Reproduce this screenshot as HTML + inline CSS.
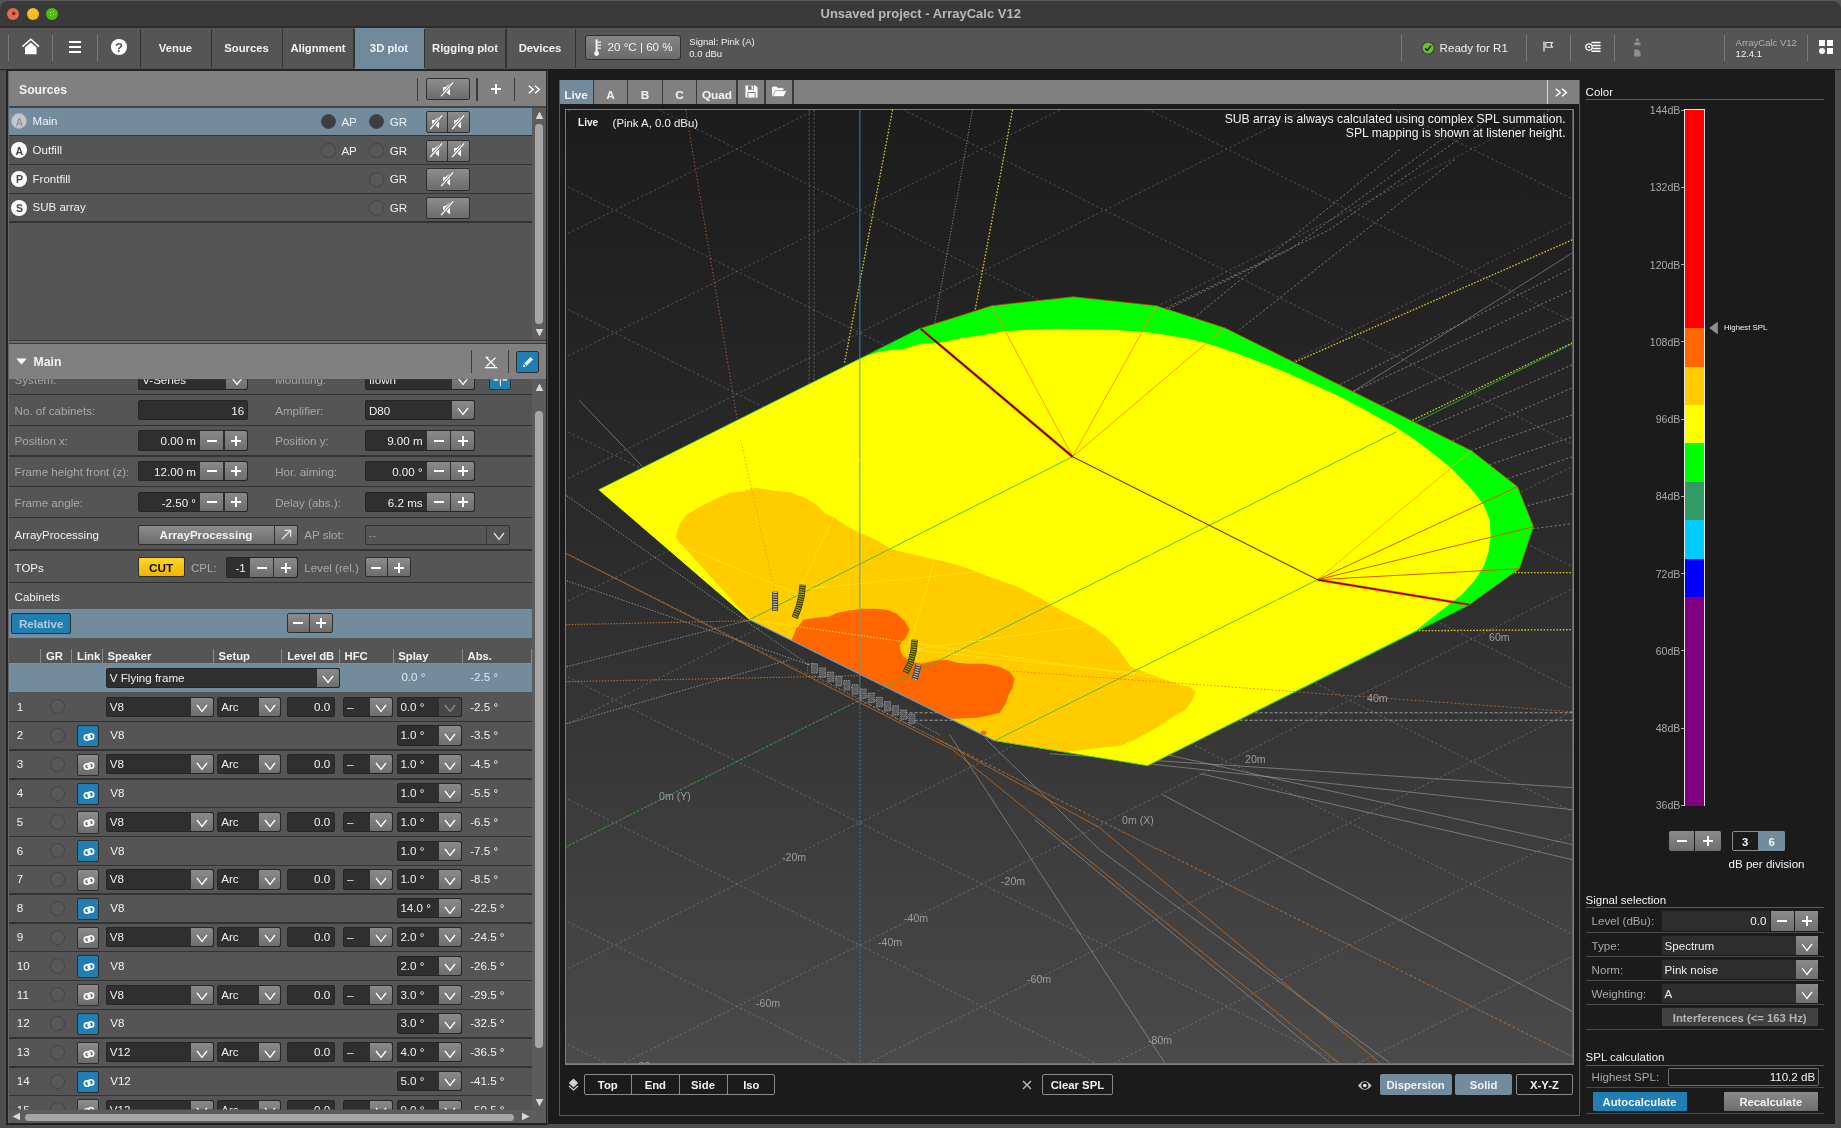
<!DOCTYPE html><html><head><meta charset="utf-8"><title>ArrayCalc</title><style>
*{box-sizing:border-box;margin:0;padding:0}
html,body{width:1841px;height:1128px;overflow:hidden;background:#4d4d4d}
#root{left:0;top:0;width:1841px;height:1128px;will-change:transform}
body{font-family:"Liberation Sans",sans-serif;font-size:11.4px;color:#f0f0f0;position:relative}
div{position:absolute}
.t{white-space:nowrap;line-height:16px;height:16px;color:#f2f2f2;font-size:11.6px}
.b{font-weight:bold}
.c{text-align:center}
.g{color:#a9a9a9}
.h{font-weight:bold;font-size:12.2px}
.tab{font-weight:bold;font-size:11.3px}
.in{background:#2f2f2f;border:1px solid #262626;border-radius:2px}
.btn{background:linear-gradient(#8c8c8c,#6c6c6c);border:1px solid #2e2e2e;border-radius:2px}
.btnf{background:linear-gradient(#8a8a8a,#6e6e6e)}
.blue{background:#1f7fb2;border:1px solid #2e2e2e;border-radius:2px}
.sep{background:#333}
.rad{border:1px solid #444;border-radius:50%;background:#585858}
.radf{border:1px solid #444;border-radius:50%;background:#3e3e3e}
svg{position:absolute;overflow:visible}
</style></head><body><div id="root">
<div class="" style="left:0.00px;top:0.00px;width:1841.00px;height:28.00px;background:#565656"></div>
<div class="" style="left:0.00px;top:1.20px;width:1841.00px;height:24.40px;background:#3a3a3a;border-radius:8px 8px 0 0"></div>
<div class="" style="left:0.00px;top:25.50px;width:1841.00px;height:2.40px;background:#2b2b2b"></div>
<div class="" style="left:7.40px;top:7.50px;width:12.00px;height:12.00px;background:#de6e4c;border-radius:50%"></div>
<div class="" style="left:26.60px;top:7.50px;width:12.00px;height:12.00px;background:#fcb90f;border-radius:50%"></div>
<div class="" style="left:45.80px;top:7.50px;width:12.00px;height:12.00px;background:#4fbd10;border-radius:50%"></div>
<div class="" style="left:11.70px;top:11.80px;width:3.40px;height:3.40px;background:#8a2010;transform:rotate(45deg)"></div>
<div class="" style="left:31.10px;top:10.00px;width:1.00px;height:1.00px;background:#e8dcc0;border-radius:50%"></div>
<div class="" style="left:34.10px;top:10.00px;width:1.00px;height:1.00px;background:#e8dcc0;border-radius:50%"></div>
<div class="" style="left:30.10px;top:12.00px;width:1.00px;height:1.00px;background:#e8dcc0;border-radius:50%"></div>
<div class="" style="left:33.10px;top:12.00px;width:1.00px;height:1.00px;background:#e8dcc0;border-radius:50%"></div>
<div class="" style="left:36.10px;top:12.00px;width:1.00px;height:1.00px;background:#e8dcc0;border-radius:50%"></div>
<div class="" style="left:31.10px;top:14.00px;width:1.00px;height:1.00px;background:#e8dcc0;border-radius:50%"></div>
<div class="" style="left:35.10px;top:14.00px;width:1.00px;height:1.00px;background:#e8dcc0;border-radius:50%"></div>
<div class="" style="left:29.10px;top:15.00px;width:1.00px;height:1.00px;background:#e8dcc0;border-radius:50%"></div>
<div class="" style="left:32.10px;top:16.00px;width:1.00px;height:1.00px;background:#e8dcc0;border-radius:50%"></div>
<div class="" style="left:50.10px;top:12.00px;width:1.00px;height:1.00px;background:#d8e8c8;border-radius:50%"></div>
<div class="" style="left:53.10px;top:11.00px;width:1.00px;height:1.00px;background:#d8e8c8;border-radius:50%"></div>
<div class="" style="left:53.10px;top:14.00px;width:1.00px;height:1.00px;background:#d8e8c8;border-radius:50%"></div>
<div class="" style="left:50.10px;top:15.00px;width:1.00px;height:1.00px;background:#d8e8c8;border-radius:50%"></div>
<div class="t b c" style="left:820.50px;width:200px;top:5.60px;font-size:13px;color:#b9b9b9">Unsaved project - ArrayCalc V12</div>
<div class="" style="left:0.00px;top:28.00px;width:1841.00px;height:40.60px;background:#555"></div>
<div class="" style="left:354.50px;top:28.00px;width:70.00px;height:40.60px;background:#708a9c"></div>
<div class="" style="left:8.00px;top:34.50px;width:1.00px;height:26.50px;background:#7a7a7a"></div>
<div class="" style="left:52.00px;top:34.50px;width:1.00px;height:26.50px;background:#7a7a7a"></div>
<div class="" style="left:96.50px;top:34.50px;width:1.00px;height:26.50px;background:#7a7a7a"></div>
<div class="" style="left:139.80px;top:28.50px;width:1.40px;height:39.00px;background:#333"></div>
<div class="" style="left:210.80px;top:28.50px;width:1.40px;height:39.00px;background:#333"></div>
<div class="" style="left:281.80px;top:28.50px;width:1.40px;height:39.00px;background:#333"></div>
<div class="" style="left:353.30px;top:28.50px;width:1.40px;height:39.00px;background:#333"></div>
<div class="" style="left:423.80px;top:28.50px;width:1.40px;height:39.00px;background:#333"></div>
<div class="" style="left:505.30px;top:28.50px;width:1.40px;height:39.00px;background:#333"></div>
<div class="" style="left:574.70px;top:28.50px;width:1.40px;height:39.00px;background:#333"></div>
<div class="t tab c" style="left:75.50px;width:200px;top:39.60px;">Venue</div>
<div class="t tab c" style="left:146.50px;width:200px;top:39.60px;">Sources</div>
<div class="t tab c" style="left:218.00px;width:200px;top:39.60px;">Alignment</div>
<div class="t tab c" style="left:289.00px;width:200px;top:39.60px;">3D plot</div>
<div class="t tab c" style="left:365.00px;width:200px;top:39.60px;">Rigging plot</div>
<div class="t tab c" style="left:440.00px;width:200px;top:39.60px;">Devices</div>
<svg style="left:21px;top:38px" width="20" height="18" viewBox="0 0 20 18"><path d="M1.5 8.6 L9.8 1.2 L18 8.6" fill="none" stroke="#fff" stroke-width="1.6"/><path d="M4 9.6 L9.8 4.6 L15.6 9.6 V16.3 H4 Z" fill="#fff"/></svg>
<div class="" style="left:69.00px;top:41.30px;width:11.60px;height:1.70px;background:#fff"></div>
<div class="" style="left:69.00px;top:46.20px;width:11.60px;height:1.70px;background:#fff"></div>
<div class="" style="left:69.00px;top:51.10px;width:11.60px;height:1.70px;background:#fff"></div>
<div class="" style="left:111.00px;top:39.30px;width:15.60px;height:15.60px;background:#fff;border-radius:50%"></div>
<div class="t b c" style="left:18.90px;width:200px;top:39.90px;color:#555;font-size:13px">?</div>
<div class="btn" style="left:584.80px;top:34.50px;width:95.80px;height:25.70px;border-radius:3px;background:linear-gradient(#858585,#6b6b6b)"></div>
<svg style="left:593px;top:38.5px" width="10" height="18" viewBox="0 0 10 18"><rect x="2.6" y="0.5" width="2" height="13" fill="#fff"/><circle cx="3.6" cy="14.6" r="2.4" fill="#fff"/><rect x="5" y="2.6" width="3" height="1.1" fill="#fff"/><rect x="5" y="5.6" width="3" height="1.1" fill="#fff"/><rect x="5" y="8.6" width="3" height="1.1" fill="#fff"/></svg>
<div class="t" style="left:607.60px;top:39.30px;font-size:11.6px">20 °C | 60 %</div>
<div class="t" style="left:689.30px;top:34.30px;font-size:9.5px">Signal: Pink (A)</div>
<div class="t" style="left:689.30px;top:45.80px;font-size:9.5px">0.0 dBu</div>
<div class="" style="left:1400.80px;top:35.00px;width:1.00px;height:26.00px;background:#7a7a7a"></div>
<div class="" style="left:1525.50px;top:35.00px;width:1.00px;height:26.00px;background:#7a7a7a"></div>
<div class="" style="left:1569.80px;top:35.00px;width:1.00px;height:26.00px;background:#7a7a7a"></div>
<div class="" style="left:1613.90px;top:35.00px;width:1.00px;height:26.00px;background:#7a7a7a"></div>
<div class="" style="left:1724.40px;top:35.00px;width:1.00px;height:26.00px;background:#7a7a7a"></div>
<div class="" style="left:1807.00px;top:35.00px;width:1.00px;height:26.00px;background:#7a7a7a"></div>
<svg style="left:1421px;top:40.5px" width="14" height="14" viewBox="0 0 14 14"><circle cx="7" cy="7" r="6.6" fill="#3a3a3a"/><circle cx="7" cy="7" r="5.6" fill="#6cbf2b"/><path d="M4 7.2 L6.2 9.4 L10 4.8" fill="none" stroke="#1c1c1c" stroke-width="1.5"/></svg>
<div class="t" style="left:1439.60px;top:40.00px;font-size:11.6px">Ready for R1</div>
<svg style="left:1543px;top:41px" width="11" height="11" viewBox="0 0 11 11"><path d="M1 0.5 V10.5" stroke="#eee" stroke-width="1.2" fill="none"/><path d="M2.8 1.5 H9.4 L7.9 3.9 L9.4 6.3 H2.8 Z" fill="none" stroke="#eee" stroke-width="1.1"/></svg>
<svg style="left:1584.5px;top:41px" width="16" height="12" viewBox="0 0 16 12"><circle cx="4" cy="6" r="3.2" fill="none" stroke="#fff" stroke-width="1.3"/><circle cx="4" cy="6" r="1.1" fill="#fff"/><path d="M6.5 1.6 H15.6 M7.6 4.5 H15.6 M7.6 7.4 H15.6 M6.5 10.3 H15.6" stroke="#fff" stroke-width="1.5"/></svg>
<svg style="left:1633px;top:38px" width="9" height="20" viewBox="0 0 9 20"><circle cx="4.4" cy="1.8" r="1.6" fill="#8e8e8e"/><path d="M1 7.2 Q1 4 4.4 4 Q7.8 4 7.8 7.2 Z" fill="#8e8e8e"/><path d="M1.2 11.6 H5 L7.6 14 V18.6 H1.2 Z" fill="#8e8e8e"/></svg>
<div class="t" style="left:1735.60px;top:34.70px;font-size:9.5px;color:#b0b0b0">ArrayCalc V12</div>
<div class="t" style="left:1735.60px;top:46.20px;font-size:9.5px">12.4.1</div>
<div class="" style="left:1818.80px;top:40.20px;width:6.00px;height:6.00px;background:#fff"></div>
<div class="" style="left:1826.60px;top:40.20px;width:6.00px;height:6.00px;background:#fff"></div>
<div class="" style="left:1818.80px;top:48.20px;width:6.00px;height:6.00px;background:#fff;border-radius:50%"></div>
<div class="" style="left:1826.60px;top:48.20px;width:6.00px;height:6.00px;background:#fff"></div>
<div class="" style="left:0.00px;top:68.60px;width:1841.00px;height:1.40px;background:#262626"></div>
<div class="" style="left:547.60px;top:68.60px;width:1287.60px;height:1055.80px;background:#1b1b1b"></div>
<div class="" style="left:6.30px;top:69.20px;width:541.40px;height:1055.60px;background:#222"></div>
<div class="" style="left:546.90px;top:69.60px;width:0.90px;height:1054.80px;background:#4a4a4a"></div>
<div class="" style="left:7.80px;top:70.60px;width:538.60px;height:1052.80px;background:#666"></div>
<div class="" style="left:8.60px;top:71.20px;width:537.40px;height:1051.60px;background:#555"></div>
<div class="" style="left:8.60px;top:71.20px;width:537.40px;height:35.20px;background:#808080"></div>
<div class="" style="left:8.60px;top:106.40px;width:537.40px;height:1.20px;background:#444"></div>
<div class="t h" style="left:19.00px;top:81.60px;">Sources</div>
<div class="" style="left:416.90px;top:78.00px;width:1.20px;height:22.50px;background:#3c3c3c"></div>
<div class="" style="left:476.40px;top:78.00px;width:1.20px;height:22.50px;background:#3c3c3c"></div>
<div class="" style="left:513.90px;top:78.00px;width:1.20px;height:22.50px;background:#3c3c3c"></div>
<div class="btn" style="left:425.50px;top:78.30px;width:44.50px;height:22.20px;"></div>
<svg style="left:439.10px;top:81.00px" width="16.8" height="16.8" viewBox="-7 -7 14 14"><path d="M-3.6 -1.9 H-1.6 L2.2 -5 V5 L-1.6 1.9 H-3.6 Z" fill="#fff"/><path d="M-5.2 5.6 L4.8 -5.8" stroke="#7b7b7b" stroke-width="2.6"/><path d="M-5.2 5.6 L4.8 -5.8" stroke="#fff" stroke-width="1.1"/></svg>
<div style="left:491.00px;top:88.20px;width:10px;height:2px;background:#fff"></div><div style="left:495.00px;top:84.20px;width:2px;height:10px;background:#fff"></div>
<svg style="left:527.5px;top:84.5px" width="13" height="9" viewBox="0 0 13 9"><path d="M0.8 0.8 L5.2 4.5 L0.8 8.2 M7 0.8 L11.4 4.5 L7 8.2" fill="none" stroke="#fff" stroke-width="1.5"/></svg>
<div class="" style="left:8.60px;top:107.60px;width:523.40px;height:27.40px;background:#728c9e"></div>
<div class="" style="left:8.60px;top:135.00px;width:523.40px;height:1.40px;background:#333"></div>
<div class="" style="left:11.40px;top:113.20px;width:16.00px;height:16.00px;background:#c4c8cb;border-radius:50%;border:1px solid #a9b0b5"></div>
<div class="t b c" style="left:-80.60px;width:200px;top:113.80px;color:#8e9aa3;font-size:10.5px">A</div>
<div class="t" style="left:32.60px;top:112.90px;font-size:11.5px">Main</div>
<div class="radf" style="left:320.60px;top:114.00px;width:15.20px;height:15.20px;"></div>
<div class="t" style="left:341.40px;top:113.80px;font-size:11.6px">AP</div>
<div class="radf" style="left:368.60px;top:114.00px;width:15.20px;height:15.20px;"></div>
<div class="t" style="left:389.80px;top:113.80px;font-size:11.6px">GR</div>
<div class="btn" style="left:425.50px;top:110.70px;width:44.50px;height:22.40px;"></div>
<div class="" style="left:447.20px;top:111.70px;width:1.20px;height:20.40px;background:#2e2e2e"></div>
<svg style="left:428.20px;top:113.60px" width="16.8" height="16.8" viewBox="-7 -7 14 14"><path d="M-3.6 -1.9 H-1.6 L2.2 -5 V5 L-1.6 1.9 H-3.6 Z" fill="#fff"/><path d="M-5.2 5.6 L4.8 -5.8" stroke="#7b7b7b" stroke-width="2.6"/><path d="M-5.2 5.6 L4.8 -5.8" stroke="#fff" stroke-width="1.1"/></svg>
<svg style="left:450.40px;top:113.60px" width="16.8" height="16.8" viewBox="-7 -7 14 14"><path d="M-3.6 -1.9 H-1.6 L2.2 -5 V5 L-1.6 1.9 H-3.6 Z" fill="#fff"/><path d="M-5.2 5.6 L4.8 -5.8" stroke="#7b7b7b" stroke-width="2.6"/><path d="M-5.2 5.6 L4.8 -5.8" stroke="#fff" stroke-width="1.1"/></svg>
<div class="" style="left:8.60px;top:163.80px;width:523.40px;height:1.40px;background:#333"></div>
<div class="" style="left:11.40px;top:142.00px;width:16.00px;height:16.00px;background:#fff;border-radius:50%"></div>
<div class="t b c" style="left:-80.60px;width:200px;top:142.60px;color:#444;font-size:10.5px">A</div>
<div class="t" style="left:32.60px;top:141.70px;font-size:11.5px">Outfill</div>
<div class="rad" style="left:320.60px;top:142.80px;width:15.20px;height:15.20px;"></div>
<div class="t" style="left:341.40px;top:142.60px;font-size:11.6px">AP</div>
<div class="rad" style="left:368.60px;top:142.80px;width:15.20px;height:15.20px;"></div>
<div class="t" style="left:389.80px;top:142.60px;font-size:11.6px">GR</div>
<div class="btn" style="left:425.50px;top:139.50px;width:44.50px;height:22.40px;"></div>
<div class="" style="left:447.20px;top:140.50px;width:1.20px;height:20.40px;background:#2e2e2e"></div>
<svg style="left:428.20px;top:142.40px" width="16.8" height="16.8" viewBox="-7 -7 14 14"><path d="M-3.6 -1.9 H-1.6 L2.2 -5 V5 L-1.6 1.9 H-3.6 Z" fill="#fff"/><path d="M-5.2 5.6 L4.8 -5.8" stroke="#7b7b7b" stroke-width="2.6"/><path d="M-5.2 5.6 L4.8 -5.8" stroke="#fff" stroke-width="1.1"/></svg>
<svg style="left:450.40px;top:142.40px" width="16.8" height="16.8" viewBox="-7 -7 14 14"><path d="M-3.6 -1.9 H-1.6 L2.2 -5 V5 L-1.6 1.9 H-3.6 Z" fill="#fff"/><path d="M-5.2 5.6 L4.8 -5.8" stroke="#7b7b7b" stroke-width="2.6"/><path d="M-5.2 5.6 L4.8 -5.8" stroke="#fff" stroke-width="1.1"/></svg>
<div class="" style="left:8.60px;top:192.60px;width:523.40px;height:1.40px;background:#333"></div>
<div class="" style="left:11.40px;top:170.80px;width:16.00px;height:16.00px;background:#fff;border-radius:50%"></div>
<div class="t b c" style="left:-80.60px;width:200px;top:171.40px;color:#444;font-size:10.5px">P</div>
<div class="t" style="left:32.60px;top:170.50px;font-size:11.5px">Frontfill</div>
<div class="rad" style="left:368.60px;top:171.60px;width:15.20px;height:15.20px;"></div>
<div class="t" style="left:389.80px;top:171.40px;font-size:11.6px">GR</div>
<div class="btn" style="left:425.50px;top:168.30px;width:44.50px;height:22.40px;"></div>
<svg style="left:439.20px;top:171.20px" width="16.8" height="16.8" viewBox="-7 -7 14 14"><path d="M-3.6 -1.9 H-1.6 L2.2 -5 V5 L-1.6 1.9 H-3.6 Z" fill="#fff"/><path d="M-5.2 5.6 L4.8 -5.8" stroke="#7b7b7b" stroke-width="2.6"/><path d="M-5.2 5.6 L4.8 -5.8" stroke="#fff" stroke-width="1.1"/></svg>
<div class="" style="left:8.60px;top:221.40px;width:523.40px;height:1.40px;background:#333"></div>
<div class="" style="left:11.40px;top:199.60px;width:16.00px;height:16.00px;background:#fff;border-radius:50%"></div>
<div class="t b c" style="left:-80.60px;width:200px;top:200.20px;color:#444;font-size:10.5px">S</div>
<div class="t" style="left:32.60px;top:199.30px;font-size:11.5px">SUB array</div>
<div class="rad" style="left:368.60px;top:200.40px;width:15.20px;height:15.20px;"></div>
<div class="t" style="left:389.80px;top:200.20px;font-size:11.6px">GR</div>
<div class="btn" style="left:425.50px;top:197.10px;width:44.50px;height:22.40px;"></div>
<svg style="left:439.20px;top:200.00px" width="16.8" height="16.8" viewBox="-7 -7 14 14"><path d="M-3.6 -1.9 H-1.6 L2.2 -5 V5 L-1.6 1.9 H-3.6 Z" fill="#fff"/><path d="M-5.2 5.6 L4.8 -5.8" stroke="#7b7b7b" stroke-width="2.6"/><path d="M-5.2 5.6 L4.8 -5.8" stroke="#fff" stroke-width="1.1"/></svg>
<div class="" style="left:532.00px;top:107.60px;width:14.00px;height:232.40px;background:#5c5c5c"></div>
<svg style="left:534.5px;top:111px" width="9" height="9" viewBox="0 0 9 9"><path d="M4.5 0.5 L8.3 8 H0.7 Z" fill="#d8d8d8"/></svg>
<svg style="left:534.5px;top:327.5px" width="9" height="9" viewBox="0 0 9 9"><path d="M4.5 8.5 L8.3 1 H0.7 Z" fill="#d8d8d8"/></svg>
<div class="" style="left:535.30px;top:123.50px;width:7.40px;height:200.50px;background:#a6a6a6;border-radius:3.7px"></div>
<div class="" style="left:8.60px;top:339.80px;width:537.40px;height:1.00px;background:#3a3a3a"></div>
<div class="" style="left:8.60px;top:340.80px;width:537.40px;height:1.80px;background:#6c6c6c"></div>
<div class="" style="left:8.60px;top:342.60px;width:537.40px;height:1.20px;background:#3a3a3a"></div>
<div class="" style="left:8.60px;top:343.80px;width:537.40px;height:35.40px;background:#808080"></div>
<svg style="left:15.5px;top:357.6px" width="11" height="7" viewBox="0 0 11 7"><path d="M0.3 0.4 H10.7 L5.5 6.4 Z" fill="#fff"/></svg>
<div class="t h" style="left:33.60px;top:354.20px;">Main</div>
<div class="" style="left:470.80px;top:350.30px;width:1.20px;height:22.30px;background:#3c3c3c"></div>
<div class="" style="left:508.00px;top:350.30px;width:1.20px;height:22.30px;background:#3c3c3c"></div>
<svg style="left:483.5px;top:355.5px" width="14" height="13" viewBox="0 0 14 13"><path d="M2.2 1.2 L11.2 10.4 M11.4 1.8 L2.4 10.4 M1.6 1.4 H4.4" fill="none" stroke="#fff" stroke-width="1.3"/><path d="M0.8 11.6 H13.2" stroke="#fff" stroke-width="1.4"/></svg>
<div class="blue" style="left:516.40px;top:350.60px;width:23.00px;height:22.00px;"></div>
<svg style="left:521.5px;top:355px" width="13" height="13" viewBox="0 0 13 13"><path d="M2.2 8.4 L8.6 2 L11 4.4 L4.6 10.8 Z" fill="#fff"/><path d="M1.6 9.2 L3.8 11.4 L0.9 12.1 Z" fill="#fff"/></svg>
<div style="left:0;top:0;width:1841px;height:1128px;clip-path:inset(379.2px 1309px 18.6px 8.6px)">
<div class="sep" style="left:8.60px;top:394.10px;width:523.40px;height:1.40px;"></div>
<div class="sep" style="left:8.60px;top:424.50px;width:523.40px;height:1.40px;"></div>
<div class="sep" style="left:8.60px;top:455.20px;width:523.40px;height:1.40px;"></div>
<div class="sep" style="left:8.60px;top:485.90px;width:523.40px;height:1.40px;"></div>
<div class="sep" style="left:8.60px;top:516.60px;width:523.40px;height:1.40px;"></div>
<div class="sep" style="left:8.60px;top:549.20px;width:523.40px;height:1.40px;"></div>
<div class="sep" style="left:8.60px;top:581.70px;width:523.40px;height:1.40px;"></div>
<div class="t g" style="left:14.60px;top:372.20px;">System:</div>
<div class="in" style="left:138.30px;top:369.30px;width:110.10px;height:20.40px;"></div>
<div class="t" style="left:142.20px;top:372.20px;">V-Series</div>
<div class="btnf" style="left:225.60px;top:370.30px;width:21.80px;height:18.40px;border-radius:0 2px 2px 0"></div>
<svg style="left:230.70px;top:376.70px" width="12" height="8" viewBox="-6 -4 12 8"><path d="M-5 -3 L0 3.4 L5 -3" fill="none" stroke="#fff" stroke-width="1.3"/></svg>
<div class="t g" style="left:275.20px;top:372.20px;">Mounting:</div>
<div class="in" style="left:365.00px;top:369.30px;width:109.60px;height:20.40px;"></div>
<div class="t" style="left:368.90px;top:372.20px;">flown</div>
<div class="btnf" style="left:452.00px;top:370.30px;width:21.60px;height:18.40px;border-radius:0 2px 2px 0"></div>
<svg style="left:457.00px;top:376.70px" width="12" height="8" viewBox="-6 -4 12 8"><path d="M-5 -3 L0 3.4 L5 -3" fill="none" stroke="#fff" stroke-width="1.3"/></svg>
<div class="blue" style="left:489.00px;top:368.60px;width:22.40px;height:21.60px;"></div>
<svg style="left:493px;top:374px" width="15" height="12" viewBox="0 0 15 12"><path d="M7.4 0 V12" stroke="#fff" stroke-width="1.1"/><rect x="0.6" y="4" width="4.6" height="2.6" fill="#fff"/><rect x="9.6" y="4" width="4.6" height="2.6" fill="#fff"/></svg>
<div class="t g" style="left:14.60px;top:402.70px;">No. of cabinets:</div>
<div class="in" style="left:138.30px;top:399.80px;width:110.10px;height:20.40px;"></div>
<div class="t" style="left:-455.80px;width:700px;text-align:right;top:402.70px;">16</div>
<div class="t g" style="left:275.20px;top:402.70px;">Amplifier:</div>
<div class="in" style="left:365.00px;top:399.80px;width:109.60px;height:20.40px;"></div>
<div class="t" style="left:368.90px;top:402.70px;">D80</div>
<div class="btnf" style="left:452.00px;top:400.80px;width:21.60px;height:18.40px;border-radius:0 2px 2px 0"></div>
<svg style="left:457.00px;top:407.20px" width="12" height="8" viewBox="-6 -4 12 8"><path d="M-5 -3 L0 3.4 L5 -3" fill="none" stroke="#fff" stroke-width="1.3"/></svg>
<div class="t g" style="left:14.60px;top:433.20px;">Position x:</div>
<div class="in" style="left:138.30px;top:430.30px;width:110.10px;height:20.40px;"></div>
<div class="t" style="left:-504.00px;width:700px;text-align:right;top:433.20px;">0.00 m</div>
<div class="btnf" style="left:200.20px;top:431.30px;width:23.20px;height:18.40px;"></div>
<div class="btnf" style="left:224.60px;top:431.30px;width:22.80px;height:18.40px;border-radius:0 2px 2px 0"></div>
<div style="left:207.10px;top:439.70px;width:10px;height:2px;background:#fff"></div>
<div style="left:231.20px;top:439.70px;width:10px;height:2px;background:#fff"></div><div style="left:235.20px;top:435.70px;width:2px;height:10px;background:#fff"></div>
<div class="t g" style="left:275.20px;top:433.20px;">Position y:</div>
<div class="in" style="left:365.00px;top:430.30px;width:109.60px;height:20.40px;"></div>
<div class="t" style="left:-277.40px;width:700px;text-align:right;top:433.20px;">9.00 m</div>
<div class="btnf" style="left:426.80px;top:431.30px;width:23.20px;height:18.40px;"></div>
<div class="btnf" style="left:451.20px;top:431.30px;width:22.40px;height:18.40px;border-radius:0 2px 2px 0"></div>
<div style="left:433.70px;top:439.70px;width:10px;height:2px;background:#fff"></div>
<div style="left:457.60px;top:439.70px;width:10px;height:2px;background:#fff"></div><div style="left:461.60px;top:435.70px;width:2px;height:10px;background:#fff"></div>
<div class="t g" style="left:14.60px;top:463.90px;">Frame height front (z):</div>
<div class="in" style="left:138.30px;top:461.00px;width:110.10px;height:20.40px;"></div>
<div class="t" style="left:-504.00px;width:700px;text-align:right;top:463.90px;">12.00 m</div>
<div class="btnf" style="left:200.20px;top:462.00px;width:23.20px;height:18.40px;"></div>
<div class="btnf" style="left:224.60px;top:462.00px;width:22.80px;height:18.40px;border-radius:0 2px 2px 0"></div>
<div style="left:207.10px;top:470.40px;width:10px;height:2px;background:#fff"></div>
<div style="left:231.20px;top:470.40px;width:10px;height:2px;background:#fff"></div><div style="left:235.20px;top:466.40px;width:2px;height:10px;background:#fff"></div>
<div class="t g" style="left:275.20px;top:463.90px;">Hor. aiming:</div>
<div class="in" style="left:365.00px;top:461.00px;width:109.60px;height:20.40px;"></div>
<div class="t" style="left:-277.40px;width:700px;text-align:right;top:463.90px;">0.00 °</div>
<div class="btnf" style="left:426.80px;top:462.00px;width:23.20px;height:18.40px;"></div>
<div class="btnf" style="left:451.20px;top:462.00px;width:22.40px;height:18.40px;border-radius:0 2px 2px 0"></div>
<div style="left:433.70px;top:470.40px;width:10px;height:2px;background:#fff"></div>
<div style="left:457.60px;top:470.40px;width:10px;height:2px;background:#fff"></div><div style="left:461.60px;top:466.40px;width:2px;height:10px;background:#fff"></div>
<div class="t g" style="left:14.60px;top:494.70px;">Frame angle:</div>
<div class="in" style="left:138.30px;top:491.80px;width:110.10px;height:20.40px;"></div>
<div class="t" style="left:-504.00px;width:700px;text-align:right;top:494.70px;">-2.50 °</div>
<div class="btnf" style="left:200.20px;top:492.80px;width:23.20px;height:18.40px;"></div>
<div class="btnf" style="left:224.60px;top:492.80px;width:22.80px;height:18.40px;border-radius:0 2px 2px 0"></div>
<div style="left:207.10px;top:501.20px;width:10px;height:2px;background:#fff"></div>
<div style="left:231.20px;top:501.20px;width:10px;height:2px;background:#fff"></div><div style="left:235.20px;top:497.20px;width:2px;height:10px;background:#fff"></div>
<div class="t g" style="left:275.20px;top:494.70px;">Delay (abs.):</div>
<div class="in" style="left:365.00px;top:491.80px;width:109.60px;height:20.40px;"></div>
<div class="t" style="left:-277.40px;width:700px;text-align:right;top:494.70px;">6.2 ms</div>
<div class="btnf" style="left:426.80px;top:492.80px;width:23.20px;height:18.40px;"></div>
<div class="btnf" style="left:451.20px;top:492.80px;width:22.40px;height:18.40px;border-radius:0 2px 2px 0"></div>
<div style="left:433.70px;top:501.20px;width:10px;height:2px;background:#fff"></div>
<div style="left:457.60px;top:501.20px;width:10px;height:2px;background:#fff"></div><div style="left:461.60px;top:497.20px;width:2px;height:10px;background:#fff"></div>
<div class="t" style="left:14.60px;top:527.20px;font-size:11.5px">ArrayProcessing</div>
<div class="btn" style="left:137.50px;top:524.50px;width:160.50px;height:20.00px;"></div>
<div class="" style="left:274.20px;top:525.50px;width:1.20px;height:18.00px;background:#2e2e2e"></div>
<div class="t b c" style="left:106.00px;width:200px;top:527.20px;font-size:11.6px">ArrayProcessing</div>
<svg style="left:281px;top:529.00px" width="11" height="11" viewBox="0 0 11 11"><path d="M1 10 L9.4 1.6 M3.6 1.4 H9.6 V7.4" fill="none" stroke="#e8e8e8" stroke-width="1.3"/></svg>
<div class="t g" style="left:304.20px;top:527.20px;">AP slot:</div>
<div class="" style="left:365.00px;top:524.50px;width:145.40px;height:20.00px;background:#555;border:1px solid #333;border-radius:2px"></div>
<div class="" style="left:486.40px;top:525.50px;width:1.00px;height:18.00px;background:#3c3c3c"></div>
<div class="t g" style="left:368.40px;top:527.20px;color:#8c8c8c">--</div>
<svg style="left:492.60px;top:531.70px" width="12" height="8" viewBox="-6 -4 12 8"><path d="M-5 -3 L0 3.4 L5 -3" fill="none" stroke="#e0e0e0" stroke-width="1.3"/></svg>
<div class="t" style="left:14.60px;top:560.10px;font-size:11.5px">TOPs</div>
<div class="" style="left:137.50px;top:557.40px;width:47.20px;height:20.00px;background:linear-gradient(#ffd52e,#f0b400);border:1px solid #2e2e2e;border-radius:2px"></div>
<div class="t b c" style="left:61.20px;width:200px;top:560.30px;color:#111;font-size:11.8px">CUT</div>
<div class="t g" style="left:191.00px;top:560.10px;">CPL:</div>
<div class="in" style="left:225.70px;top:557.20px;width:72.50px;height:20.40px;"></div>
<div class="t" style="left:-454.20px;width:700px;text-align:right;top:560.10px;">-1</div>
<div class="btnf" style="left:250.00px;top:558.20px;width:23.20px;height:18.40px;"></div>
<div class="btnf" style="left:274.40px;top:558.20px;width:22.80px;height:18.40px;border-radius:0 2px 2px 0"></div>
<div style="left:256.90px;top:566.60px;width:10px;height:2px;background:#fff"></div>
<div style="left:281.00px;top:566.60px;width:10px;height:2px;background:#fff"></div><div style="left:285.00px;top:562.60px;width:2px;height:10px;background:#fff"></div>
<div class="t g" style="left:304.20px;top:560.10px;">Level (rel.)</div>
<div class="btn" style="left:365.00px;top:557.40px;width:45.60px;height:20.00px;"></div>
<div class="" style="left:387.20px;top:558.40px;width:1.20px;height:18.00px;background:#2e2e2e"></div>
<div style="left:371.20px;top:566.60px;width:10px;height:2px;background:#fff"></div>
<div style="left:394.20px;top:566.60px;width:10px;height:2px;background:#fff"></div><div style="left:398.20px;top:562.60px;width:2px;height:10px;background:#fff"></div>
<div class="t" style="left:14.60px;top:589.20px;font-size:11.5px">Cabinets</div>
<div class="" style="left:8.60px;top:609.20px;width:523.40px;height:28.70px;background:#728c9e"></div>
<div class="blue" style="left:11.20px;top:613.10px;width:59.60px;height:20.80px;"></div>
<div class="t b c" style="left:-58.80px;width:200px;top:616.20px;color:#b4c8d6;font-size:11.6px">Relative</div>
<div class="btn" style="left:287.20px;top:613.10px;width:45.80px;height:20.20px;"></div>
<div class="" style="left:309.20px;top:614.10px;width:1.20px;height:18.20px;background:#2e2e2e"></div>
<div style="left:293.40px;top:622.30px;width:10px;height:2px;background:#fff"></div>
<div style="left:316.40px;top:622.30px;width:10px;height:2px;background:#fff"></div><div style="left:320.40px;top:618.30px;width:2px;height:10px;background:#fff"></div>
<div class="" style="left:8.60px;top:662.80px;width:523.40px;height:1.20px;background:#8a8a8a"></div>
<div class="" style="left:40.20px;top:649.00px;width:1.10px;height:14.00px;background:#8a8a8a"></div>
<div class="" style="left:71.00px;top:649.00px;width:1.10px;height:14.00px;background:#8a8a8a"></div>
<div class="" style="left:102.10px;top:649.00px;width:1.10px;height:14.00px;background:#8a8a8a"></div>
<div class="" style="left:213.00px;top:649.00px;width:1.10px;height:14.00px;background:#8a8a8a"></div>
<div class="" style="left:281.10px;top:649.00px;width:1.10px;height:14.00px;background:#8a8a8a"></div>
<div class="" style="left:339.00px;top:649.00px;width:1.10px;height:14.00px;background:#8a8a8a"></div>
<div class="" style="left:392.50px;top:649.00px;width:1.10px;height:14.00px;background:#8a8a8a"></div>
<div class="" style="left:461.90px;top:649.00px;width:1.10px;height:14.00px;background:#8a8a8a"></div>
<div class="" style="left:530.80px;top:649.00px;width:1.10px;height:14.00px;background:#8a8a8a"></div>
<div class="t tab" style="left:46.00px;top:647.70px;">GR</div>
<div class="t tab" style="left:77.00px;top:647.70px;">Link</div>
<div class="t tab" style="left:107.50px;top:647.70px;">Speaker</div>
<div class="t tab" style="left:218.60px;top:647.70px;">Setup</div>
<div class="t tab" style="left:287.20px;top:647.70px;">Level dB</div>
<div class="t tab" style="left:344.50px;top:647.70px;">HFC</div>
<div class="t tab" style="left:398.30px;top:647.70px;">Splay</div>
<div class="t tab" style="left:467.50px;top:647.70px;">Abs.</div>
<div class="" style="left:8.60px;top:664.00px;width:523.40px;height:28.20px;background:#728c9e"></div>
<div class="in" style="left:105.90px;top:667.70px;width:233.90px;height:20.00px;"></div>
<div class="t" style="left:109.80px;top:669.50px;">V Flying frame</div>
<div class="btnf" style="left:316.70px;top:668.70px;width:22.10px;height:18.00px;border-radius:0 2px 2px 0"></div>
<svg style="left:321.95px;top:674.90px" width="12" height="8" viewBox="-6 -4 12 8"><path d="M-5 -3 L0 3.4 L5 -3" fill="none" stroke="#fff" stroke-width="1.3"/></svg>
<div class="t" style="left:401.40px;top:669.40px;color:#dde6ec">0.0 °</div>
<div class="t" style="left:470.20px;top:669.40px;color:#dde6ec">-2.5 °</div>
<div class="sep" style="left:8.60px;top:720.60px;width:523.40px;height:1.40px;"></div>
<div class="t" style="left:16.80px;top:698.50px;font-size:11.6px">1</div>
<div class="rad" style="left:49.80px;top:699.20px;width:15.20px;height:15.20px;"></div>
<div class="in" style="left:105.90px;top:696.50px;width:107.70px;height:20.40px;"></div>
<div class="t" style="left:109.80px;top:698.50px;">V8</div>
<div class="btnf" style="left:190.80px;top:697.50px;width:21.80px;height:18.40px;border-radius:0 2px 2px 0"></div>
<svg style="left:195.90px;top:703.90px" width="12" height="8" viewBox="-6 -4 12 8"><path d="M-5 -3 L0 3.4 L5 -3" fill="none" stroke="#fff" stroke-width="1.3"/></svg>
<div class="in" style="left:217.30px;top:696.50px;width:64.00px;height:20.40px;"></div>
<div class="t" style="left:221.20px;top:698.50px;">Arc</div>
<div class="btnf" style="left:258.80px;top:697.50px;width:21.50px;height:18.40px;border-radius:0 2px 2px 0"></div>
<svg style="left:263.75px;top:703.90px" width="12" height="8" viewBox="-6 -4 12 8"><path d="M-5 -3 L0 3.4 L5 -3" fill="none" stroke="#fff" stroke-width="1.3"/></svg>
<div class="in" style="left:287.20px;top:696.50px;width:47.80px;height:20.40px;"></div>
<div class="t" style="left:-369.80px;width:700px;text-align:right;top:698.50px;">0.0</div>
<div class="in" style="left:343.00px;top:696.50px;width:50.30px;height:20.40px;"></div>
<div class="t" style="left:346.90px;top:698.50px;">–</div>
<div class="btnf" style="left:370.10px;top:697.50px;width:22.20px;height:18.40px;border-radius:0 2px 2px 0"></div>
<svg style="left:375.40px;top:703.90px" width="12" height="8" viewBox="-6 -4 12 8"><path d="M-5 -3 L0 3.4 L5 -3" fill="none" stroke="#fff" stroke-width="1.3"/></svg>
<div class="in" style="left:396.50px;top:696.50px;width:65.90px;height:20.40px;"></div>
<div class="t" style="left:400.40px;top:698.50px;">0.0 °</div>
<div class="" style="left:438.70px;top:697.50px;width:22.70px;height:18.40px;background:#484848;border-radius:0 2px 2px 0"></div>
<svg style="left:444.25px;top:703.90px" width="12" height="8" viewBox="-6 -4 12 8"><path d="M-5 -3 L0 3.4 L5 -3" fill="none" stroke="#8a8a8a" stroke-width="1.3"/></svg>
<div class="t" style="left:470.20px;top:698.50px;">-2.5 °</div>
<div class="sep" style="left:8.60px;top:749.40px;width:523.40px;height:1.40px;"></div>
<div class="t" style="left:16.80px;top:727.30px;font-size:11.6px">2</div>
<div class="rad" style="left:49.80px;top:728.00px;width:15.20px;height:15.20px;"></div>
<div class="blue" style="left:77.40px;top:725.00px;width:22.00px;height:22.30px;"></div>
<svg style="left:81.90px;top:730.90px" width="14" height="12" viewBox="-7 -6 14 12"><circle cx="-1.9" cy="0.5" r="2.75" fill="none" stroke="#fff" stroke-width="1.7"/><circle cx="1.9" cy="-0.5" r="2.75" fill="none" stroke="#fff" stroke-width="1.7"/></svg>
<div class="t" style="left:110.20px;top:727.30px;">V8</div>
<div class="in" style="left:396.50px;top:725.30px;width:65.90px;height:20.40px;"></div>
<div class="t" style="left:400.40px;top:727.30px;">1.0 °</div>
<div class="btnf" style="left:438.70px;top:726.30px;width:22.70px;height:18.40px;border-radius:0 2px 2px 0"></div>
<svg style="left:444.25px;top:732.70px" width="12" height="8" viewBox="-6 -4 12 8"><path d="M-5 -3 L0 3.4 L5 -3" fill="none" stroke="#fff" stroke-width="1.3"/></svg>
<div class="t" style="left:470.20px;top:727.30px;">-3.5 °</div>
<div class="sep" style="left:8.60px;top:778.20px;width:523.40px;height:1.40px;"></div>
<div class="t" style="left:16.80px;top:756.10px;font-size:11.6px">3</div>
<div class="rad" style="left:49.80px;top:756.80px;width:15.20px;height:15.20px;"></div>
<div class="btn" style="left:77.40px;top:753.80px;width:22.00px;height:22.30px;"></div>
<svg style="left:81.90px;top:759.70px" width="14" height="12" viewBox="-7 -6 14 12"><circle cx="-1.9" cy="0.5" r="2.75" fill="none" stroke="#fff" stroke-width="1.7"/><circle cx="1.9" cy="-0.5" r="2.75" fill="none" stroke="#fff" stroke-width="1.7"/></svg>
<div class="in" style="left:105.90px;top:754.10px;width:107.70px;height:20.40px;"></div>
<div class="t" style="left:109.80px;top:756.10px;">V8</div>
<div class="btnf" style="left:190.80px;top:755.10px;width:21.80px;height:18.40px;border-radius:0 2px 2px 0"></div>
<svg style="left:195.90px;top:761.50px" width="12" height="8" viewBox="-6 -4 12 8"><path d="M-5 -3 L0 3.4 L5 -3" fill="none" stroke="#fff" stroke-width="1.3"/></svg>
<div class="in" style="left:217.30px;top:754.10px;width:64.00px;height:20.40px;"></div>
<div class="t" style="left:221.20px;top:756.10px;">Arc</div>
<div class="btnf" style="left:258.80px;top:755.10px;width:21.50px;height:18.40px;border-radius:0 2px 2px 0"></div>
<svg style="left:263.75px;top:761.50px" width="12" height="8" viewBox="-6 -4 12 8"><path d="M-5 -3 L0 3.4 L5 -3" fill="none" stroke="#fff" stroke-width="1.3"/></svg>
<div class="in" style="left:287.20px;top:754.10px;width:47.80px;height:20.40px;"></div>
<div class="t" style="left:-369.80px;width:700px;text-align:right;top:756.10px;">0.0</div>
<div class="in" style="left:343.00px;top:754.10px;width:50.30px;height:20.40px;"></div>
<div class="t" style="left:346.90px;top:756.10px;">–</div>
<div class="btnf" style="left:370.10px;top:755.10px;width:22.20px;height:18.40px;border-radius:0 2px 2px 0"></div>
<svg style="left:375.40px;top:761.50px" width="12" height="8" viewBox="-6 -4 12 8"><path d="M-5 -3 L0 3.4 L5 -3" fill="none" stroke="#fff" stroke-width="1.3"/></svg>
<div class="in" style="left:396.50px;top:754.10px;width:65.90px;height:20.40px;"></div>
<div class="t" style="left:400.40px;top:756.10px;">1.0 °</div>
<div class="btnf" style="left:438.70px;top:755.10px;width:22.70px;height:18.40px;border-radius:0 2px 2px 0"></div>
<svg style="left:444.25px;top:761.50px" width="12" height="8" viewBox="-6 -4 12 8"><path d="M-5 -3 L0 3.4 L5 -3" fill="none" stroke="#fff" stroke-width="1.3"/></svg>
<div class="t" style="left:470.20px;top:756.10px;">-4.5 °</div>
<div class="sep" style="left:8.60px;top:807.00px;width:523.40px;height:1.40px;"></div>
<div class="t" style="left:16.80px;top:784.90px;font-size:11.6px">4</div>
<div class="rad" style="left:49.80px;top:785.60px;width:15.20px;height:15.20px;"></div>
<div class="blue" style="left:77.40px;top:782.60px;width:22.00px;height:22.30px;"></div>
<svg style="left:81.90px;top:788.50px" width="14" height="12" viewBox="-7 -6 14 12"><circle cx="-1.9" cy="0.5" r="2.75" fill="none" stroke="#fff" stroke-width="1.7"/><circle cx="1.9" cy="-0.5" r="2.75" fill="none" stroke="#fff" stroke-width="1.7"/></svg>
<div class="t" style="left:110.20px;top:784.90px;">V8</div>
<div class="in" style="left:396.50px;top:782.90px;width:65.90px;height:20.40px;"></div>
<div class="t" style="left:400.40px;top:784.90px;">1.0 °</div>
<div class="btnf" style="left:438.70px;top:783.90px;width:22.70px;height:18.40px;border-radius:0 2px 2px 0"></div>
<svg style="left:444.25px;top:790.30px" width="12" height="8" viewBox="-6 -4 12 8"><path d="M-5 -3 L0 3.4 L5 -3" fill="none" stroke="#fff" stroke-width="1.3"/></svg>
<div class="t" style="left:470.20px;top:784.90px;">-5.5 °</div>
<div class="sep" style="left:8.60px;top:835.80px;width:523.40px;height:1.40px;"></div>
<div class="t" style="left:16.80px;top:813.70px;font-size:11.6px">5</div>
<div class="rad" style="left:49.80px;top:814.40px;width:15.20px;height:15.20px;"></div>
<div class="btn" style="left:77.40px;top:811.40px;width:22.00px;height:22.30px;"></div>
<svg style="left:81.90px;top:817.30px" width="14" height="12" viewBox="-7 -6 14 12"><circle cx="-1.9" cy="0.5" r="2.75" fill="none" stroke="#fff" stroke-width="1.7"/><circle cx="1.9" cy="-0.5" r="2.75" fill="none" stroke="#fff" stroke-width="1.7"/></svg>
<div class="in" style="left:105.90px;top:811.70px;width:107.70px;height:20.40px;"></div>
<div class="t" style="left:109.80px;top:813.70px;">V8</div>
<div class="btnf" style="left:190.80px;top:812.70px;width:21.80px;height:18.40px;border-radius:0 2px 2px 0"></div>
<svg style="left:195.90px;top:819.10px" width="12" height="8" viewBox="-6 -4 12 8"><path d="M-5 -3 L0 3.4 L5 -3" fill="none" stroke="#fff" stroke-width="1.3"/></svg>
<div class="in" style="left:217.30px;top:811.70px;width:64.00px;height:20.40px;"></div>
<div class="t" style="left:221.20px;top:813.70px;">Arc</div>
<div class="btnf" style="left:258.80px;top:812.70px;width:21.50px;height:18.40px;border-radius:0 2px 2px 0"></div>
<svg style="left:263.75px;top:819.10px" width="12" height="8" viewBox="-6 -4 12 8"><path d="M-5 -3 L0 3.4 L5 -3" fill="none" stroke="#fff" stroke-width="1.3"/></svg>
<div class="in" style="left:287.20px;top:811.70px;width:47.80px;height:20.40px;"></div>
<div class="t" style="left:-369.80px;width:700px;text-align:right;top:813.70px;">0.0</div>
<div class="in" style="left:343.00px;top:811.70px;width:50.30px;height:20.40px;"></div>
<div class="t" style="left:346.90px;top:813.70px;">–</div>
<div class="btnf" style="left:370.10px;top:812.70px;width:22.20px;height:18.40px;border-radius:0 2px 2px 0"></div>
<svg style="left:375.40px;top:819.10px" width="12" height="8" viewBox="-6 -4 12 8"><path d="M-5 -3 L0 3.4 L5 -3" fill="none" stroke="#fff" stroke-width="1.3"/></svg>
<div class="in" style="left:396.50px;top:811.70px;width:65.90px;height:20.40px;"></div>
<div class="t" style="left:400.40px;top:813.70px;">1.0 °</div>
<div class="btnf" style="left:438.70px;top:812.70px;width:22.70px;height:18.40px;border-radius:0 2px 2px 0"></div>
<svg style="left:444.25px;top:819.10px" width="12" height="8" viewBox="-6 -4 12 8"><path d="M-5 -3 L0 3.4 L5 -3" fill="none" stroke="#fff" stroke-width="1.3"/></svg>
<div class="t" style="left:470.20px;top:813.70px;">-6.5 °</div>
<div class="sep" style="left:8.60px;top:864.60px;width:523.40px;height:1.40px;"></div>
<div class="t" style="left:16.80px;top:842.50px;font-size:11.6px">6</div>
<div class="rad" style="left:49.80px;top:843.20px;width:15.20px;height:15.20px;"></div>
<div class="blue" style="left:77.40px;top:840.20px;width:22.00px;height:22.30px;"></div>
<svg style="left:81.90px;top:846.10px" width="14" height="12" viewBox="-7 -6 14 12"><circle cx="-1.9" cy="0.5" r="2.75" fill="none" stroke="#fff" stroke-width="1.7"/><circle cx="1.9" cy="-0.5" r="2.75" fill="none" stroke="#fff" stroke-width="1.7"/></svg>
<div class="t" style="left:110.20px;top:842.50px;">V8</div>
<div class="in" style="left:396.50px;top:840.50px;width:65.90px;height:20.40px;"></div>
<div class="t" style="left:400.40px;top:842.50px;">1.0 °</div>
<div class="btnf" style="left:438.70px;top:841.50px;width:22.70px;height:18.40px;border-radius:0 2px 2px 0"></div>
<svg style="left:444.25px;top:847.90px" width="12" height="8" viewBox="-6 -4 12 8"><path d="M-5 -3 L0 3.4 L5 -3" fill="none" stroke="#fff" stroke-width="1.3"/></svg>
<div class="t" style="left:470.20px;top:842.50px;">-7.5 °</div>
<div class="sep" style="left:8.60px;top:893.40px;width:523.40px;height:1.40px;"></div>
<div class="t" style="left:16.80px;top:871.30px;font-size:11.6px">7</div>
<div class="rad" style="left:49.80px;top:872.00px;width:15.20px;height:15.20px;"></div>
<div class="btn" style="left:77.40px;top:869.00px;width:22.00px;height:22.30px;"></div>
<svg style="left:81.90px;top:874.90px" width="14" height="12" viewBox="-7 -6 14 12"><circle cx="-1.9" cy="0.5" r="2.75" fill="none" stroke="#fff" stroke-width="1.7"/><circle cx="1.9" cy="-0.5" r="2.75" fill="none" stroke="#fff" stroke-width="1.7"/></svg>
<div class="in" style="left:105.90px;top:869.30px;width:107.70px;height:20.40px;"></div>
<div class="t" style="left:109.80px;top:871.30px;">V8</div>
<div class="btnf" style="left:190.80px;top:870.30px;width:21.80px;height:18.40px;border-radius:0 2px 2px 0"></div>
<svg style="left:195.90px;top:876.70px" width="12" height="8" viewBox="-6 -4 12 8"><path d="M-5 -3 L0 3.4 L5 -3" fill="none" stroke="#fff" stroke-width="1.3"/></svg>
<div class="in" style="left:217.30px;top:869.30px;width:64.00px;height:20.40px;"></div>
<div class="t" style="left:221.20px;top:871.30px;">Arc</div>
<div class="btnf" style="left:258.80px;top:870.30px;width:21.50px;height:18.40px;border-radius:0 2px 2px 0"></div>
<svg style="left:263.75px;top:876.70px" width="12" height="8" viewBox="-6 -4 12 8"><path d="M-5 -3 L0 3.4 L5 -3" fill="none" stroke="#fff" stroke-width="1.3"/></svg>
<div class="in" style="left:287.20px;top:869.30px;width:47.80px;height:20.40px;"></div>
<div class="t" style="left:-369.80px;width:700px;text-align:right;top:871.30px;">0.0</div>
<div class="in" style="left:343.00px;top:869.30px;width:50.30px;height:20.40px;"></div>
<div class="t" style="left:346.90px;top:871.30px;">–</div>
<div class="btnf" style="left:370.10px;top:870.30px;width:22.20px;height:18.40px;border-radius:0 2px 2px 0"></div>
<svg style="left:375.40px;top:876.70px" width="12" height="8" viewBox="-6 -4 12 8"><path d="M-5 -3 L0 3.4 L5 -3" fill="none" stroke="#fff" stroke-width="1.3"/></svg>
<div class="in" style="left:396.50px;top:869.30px;width:65.90px;height:20.40px;"></div>
<div class="t" style="left:400.40px;top:871.30px;">1.0 °</div>
<div class="btnf" style="left:438.70px;top:870.30px;width:22.70px;height:18.40px;border-radius:0 2px 2px 0"></div>
<svg style="left:444.25px;top:876.70px" width="12" height="8" viewBox="-6 -4 12 8"><path d="M-5 -3 L0 3.4 L5 -3" fill="none" stroke="#fff" stroke-width="1.3"/></svg>
<div class="t" style="left:470.20px;top:871.30px;">-8.5 °</div>
<div class="sep" style="left:8.60px;top:922.20px;width:523.40px;height:1.40px;"></div>
<div class="t" style="left:16.80px;top:900.10px;font-size:11.6px">8</div>
<div class="rad" style="left:49.80px;top:900.80px;width:15.20px;height:15.20px;"></div>
<div class="blue" style="left:77.40px;top:897.80px;width:22.00px;height:22.30px;"></div>
<svg style="left:81.90px;top:903.70px" width="14" height="12" viewBox="-7 -6 14 12"><circle cx="-1.9" cy="0.5" r="2.75" fill="none" stroke="#fff" stroke-width="1.7"/><circle cx="1.9" cy="-0.5" r="2.75" fill="none" stroke="#fff" stroke-width="1.7"/></svg>
<div class="t" style="left:110.20px;top:900.10px;">V8</div>
<div class="in" style="left:396.50px;top:898.10px;width:65.90px;height:20.40px;"></div>
<div class="t" style="left:400.40px;top:900.10px;">14.0 °</div>
<div class="btnf" style="left:438.70px;top:899.10px;width:22.70px;height:18.40px;border-radius:0 2px 2px 0"></div>
<svg style="left:444.25px;top:905.50px" width="12" height="8" viewBox="-6 -4 12 8"><path d="M-5 -3 L0 3.4 L5 -3" fill="none" stroke="#fff" stroke-width="1.3"/></svg>
<div class="t" style="left:470.20px;top:900.10px;">-22.5 °</div>
<div class="sep" style="left:8.60px;top:951.00px;width:523.40px;height:1.40px;"></div>
<div class="t" style="left:16.80px;top:928.90px;font-size:11.6px">9</div>
<div class="rad" style="left:49.80px;top:929.60px;width:15.20px;height:15.20px;"></div>
<div class="btn" style="left:77.40px;top:926.60px;width:22.00px;height:22.30px;"></div>
<svg style="left:81.90px;top:932.50px" width="14" height="12" viewBox="-7 -6 14 12"><circle cx="-1.9" cy="0.5" r="2.75" fill="none" stroke="#fff" stroke-width="1.7"/><circle cx="1.9" cy="-0.5" r="2.75" fill="none" stroke="#fff" stroke-width="1.7"/></svg>
<div class="in" style="left:105.90px;top:926.90px;width:107.70px;height:20.40px;"></div>
<div class="t" style="left:109.80px;top:928.90px;">V8</div>
<div class="btnf" style="left:190.80px;top:927.90px;width:21.80px;height:18.40px;border-radius:0 2px 2px 0"></div>
<svg style="left:195.90px;top:934.30px" width="12" height="8" viewBox="-6 -4 12 8"><path d="M-5 -3 L0 3.4 L5 -3" fill="none" stroke="#fff" stroke-width="1.3"/></svg>
<div class="in" style="left:217.30px;top:926.90px;width:64.00px;height:20.40px;"></div>
<div class="t" style="left:221.20px;top:928.90px;">Arc</div>
<div class="btnf" style="left:258.80px;top:927.90px;width:21.50px;height:18.40px;border-radius:0 2px 2px 0"></div>
<svg style="left:263.75px;top:934.30px" width="12" height="8" viewBox="-6 -4 12 8"><path d="M-5 -3 L0 3.4 L5 -3" fill="none" stroke="#fff" stroke-width="1.3"/></svg>
<div class="in" style="left:287.20px;top:926.90px;width:47.80px;height:20.40px;"></div>
<div class="t" style="left:-369.80px;width:700px;text-align:right;top:928.90px;">0.0</div>
<div class="in" style="left:343.00px;top:926.90px;width:50.30px;height:20.40px;"></div>
<div class="t" style="left:346.90px;top:928.90px;">–</div>
<div class="btnf" style="left:370.10px;top:927.90px;width:22.20px;height:18.40px;border-radius:0 2px 2px 0"></div>
<svg style="left:375.40px;top:934.30px" width="12" height="8" viewBox="-6 -4 12 8"><path d="M-5 -3 L0 3.4 L5 -3" fill="none" stroke="#fff" stroke-width="1.3"/></svg>
<div class="in" style="left:396.50px;top:926.90px;width:65.90px;height:20.40px;"></div>
<div class="t" style="left:400.40px;top:928.90px;">2.0 °</div>
<div class="btnf" style="left:438.70px;top:927.90px;width:22.70px;height:18.40px;border-radius:0 2px 2px 0"></div>
<svg style="left:444.25px;top:934.30px" width="12" height="8" viewBox="-6 -4 12 8"><path d="M-5 -3 L0 3.4 L5 -3" fill="none" stroke="#fff" stroke-width="1.3"/></svg>
<div class="t" style="left:470.20px;top:928.90px;">-24.5 °</div>
<div class="sep" style="left:8.60px;top:979.80px;width:523.40px;height:1.40px;"></div>
<div class="t" style="left:16.80px;top:957.70px;font-size:11.6px">10</div>
<div class="rad" style="left:49.80px;top:958.40px;width:15.20px;height:15.20px;"></div>
<div class="blue" style="left:77.40px;top:955.40px;width:22.00px;height:22.30px;"></div>
<svg style="left:81.90px;top:961.30px" width="14" height="12" viewBox="-7 -6 14 12"><circle cx="-1.9" cy="0.5" r="2.75" fill="none" stroke="#fff" stroke-width="1.7"/><circle cx="1.9" cy="-0.5" r="2.75" fill="none" stroke="#fff" stroke-width="1.7"/></svg>
<div class="t" style="left:110.20px;top:957.70px;">V8</div>
<div class="in" style="left:396.50px;top:955.70px;width:65.90px;height:20.40px;"></div>
<div class="t" style="left:400.40px;top:957.70px;">2.0 °</div>
<div class="btnf" style="left:438.70px;top:956.70px;width:22.70px;height:18.40px;border-radius:0 2px 2px 0"></div>
<svg style="left:444.25px;top:963.10px" width="12" height="8" viewBox="-6 -4 12 8"><path d="M-5 -3 L0 3.4 L5 -3" fill="none" stroke="#fff" stroke-width="1.3"/></svg>
<div class="t" style="left:470.20px;top:957.70px;">-26.5 °</div>
<div class="sep" style="left:8.60px;top:1008.60px;width:523.40px;height:1.40px;"></div>
<div class="t" style="left:16.80px;top:986.50px;font-size:11.6px">11</div>
<div class="rad" style="left:49.80px;top:987.20px;width:15.20px;height:15.20px;"></div>
<div class="btn" style="left:77.40px;top:984.20px;width:22.00px;height:22.30px;"></div>
<svg style="left:81.90px;top:990.10px" width="14" height="12" viewBox="-7 -6 14 12"><circle cx="-1.9" cy="0.5" r="2.75" fill="none" stroke="#fff" stroke-width="1.7"/><circle cx="1.9" cy="-0.5" r="2.75" fill="none" stroke="#fff" stroke-width="1.7"/></svg>
<div class="in" style="left:105.90px;top:984.50px;width:107.70px;height:20.40px;"></div>
<div class="t" style="left:109.80px;top:986.50px;">V8</div>
<div class="btnf" style="left:190.80px;top:985.50px;width:21.80px;height:18.40px;border-radius:0 2px 2px 0"></div>
<svg style="left:195.90px;top:991.90px" width="12" height="8" viewBox="-6 -4 12 8"><path d="M-5 -3 L0 3.4 L5 -3" fill="none" stroke="#fff" stroke-width="1.3"/></svg>
<div class="in" style="left:217.30px;top:984.50px;width:64.00px;height:20.40px;"></div>
<div class="t" style="left:221.20px;top:986.50px;">Arc</div>
<div class="btnf" style="left:258.80px;top:985.50px;width:21.50px;height:18.40px;border-radius:0 2px 2px 0"></div>
<svg style="left:263.75px;top:991.90px" width="12" height="8" viewBox="-6 -4 12 8"><path d="M-5 -3 L0 3.4 L5 -3" fill="none" stroke="#fff" stroke-width="1.3"/></svg>
<div class="in" style="left:287.20px;top:984.50px;width:47.80px;height:20.40px;"></div>
<div class="t" style="left:-369.80px;width:700px;text-align:right;top:986.50px;">0.0</div>
<div class="in" style="left:343.00px;top:984.50px;width:50.30px;height:20.40px;"></div>
<div class="t" style="left:346.90px;top:986.50px;">–</div>
<div class="btnf" style="left:370.10px;top:985.50px;width:22.20px;height:18.40px;border-radius:0 2px 2px 0"></div>
<svg style="left:375.40px;top:991.90px" width="12" height="8" viewBox="-6 -4 12 8"><path d="M-5 -3 L0 3.4 L5 -3" fill="none" stroke="#fff" stroke-width="1.3"/></svg>
<div class="in" style="left:396.50px;top:984.50px;width:65.90px;height:20.40px;"></div>
<div class="t" style="left:400.40px;top:986.50px;">3.0 °</div>
<div class="btnf" style="left:438.70px;top:985.50px;width:22.70px;height:18.40px;border-radius:0 2px 2px 0"></div>
<svg style="left:444.25px;top:991.90px" width="12" height="8" viewBox="-6 -4 12 8"><path d="M-5 -3 L0 3.4 L5 -3" fill="none" stroke="#fff" stroke-width="1.3"/></svg>
<div class="t" style="left:470.20px;top:986.50px;">-29.5 °</div>
<div class="sep" style="left:8.60px;top:1037.40px;width:523.40px;height:1.40px;"></div>
<div class="t" style="left:16.80px;top:1015.30px;font-size:11.6px">12</div>
<div class="rad" style="left:49.80px;top:1016.00px;width:15.20px;height:15.20px;"></div>
<div class="blue" style="left:77.40px;top:1013.00px;width:22.00px;height:22.30px;"></div>
<svg style="left:81.90px;top:1018.90px" width="14" height="12" viewBox="-7 -6 14 12"><circle cx="-1.9" cy="0.5" r="2.75" fill="none" stroke="#fff" stroke-width="1.7"/><circle cx="1.9" cy="-0.5" r="2.75" fill="none" stroke="#fff" stroke-width="1.7"/></svg>
<div class="t" style="left:110.20px;top:1015.30px;">V8</div>
<div class="in" style="left:396.50px;top:1013.30px;width:65.90px;height:20.40px;"></div>
<div class="t" style="left:400.40px;top:1015.30px;">3.0 °</div>
<div class="btnf" style="left:438.70px;top:1014.30px;width:22.70px;height:18.40px;border-radius:0 2px 2px 0"></div>
<svg style="left:444.25px;top:1020.70px" width="12" height="8" viewBox="-6 -4 12 8"><path d="M-5 -3 L0 3.4 L5 -3" fill="none" stroke="#fff" stroke-width="1.3"/></svg>
<div class="t" style="left:470.20px;top:1015.30px;">-32.5 °</div>
<div class="sep" style="left:8.60px;top:1066.20px;width:523.40px;height:1.40px;"></div>
<div class="t" style="left:16.80px;top:1044.10px;font-size:11.6px">13</div>
<div class="rad" style="left:49.80px;top:1044.80px;width:15.20px;height:15.20px;"></div>
<div class="btn" style="left:77.40px;top:1041.80px;width:22.00px;height:22.30px;"></div>
<svg style="left:81.90px;top:1047.70px" width="14" height="12" viewBox="-7 -6 14 12"><circle cx="-1.9" cy="0.5" r="2.75" fill="none" stroke="#fff" stroke-width="1.7"/><circle cx="1.9" cy="-0.5" r="2.75" fill="none" stroke="#fff" stroke-width="1.7"/></svg>
<div class="in" style="left:105.90px;top:1042.10px;width:107.70px;height:20.40px;"></div>
<div class="t" style="left:109.80px;top:1044.10px;">V12</div>
<div class="btnf" style="left:190.80px;top:1043.10px;width:21.80px;height:18.40px;border-radius:0 2px 2px 0"></div>
<svg style="left:195.90px;top:1049.50px" width="12" height="8" viewBox="-6 -4 12 8"><path d="M-5 -3 L0 3.4 L5 -3" fill="none" stroke="#fff" stroke-width="1.3"/></svg>
<div class="in" style="left:217.30px;top:1042.10px;width:64.00px;height:20.40px;"></div>
<div class="t" style="left:221.20px;top:1044.10px;">Arc</div>
<div class="btnf" style="left:258.80px;top:1043.10px;width:21.50px;height:18.40px;border-radius:0 2px 2px 0"></div>
<svg style="left:263.75px;top:1049.50px" width="12" height="8" viewBox="-6 -4 12 8"><path d="M-5 -3 L0 3.4 L5 -3" fill="none" stroke="#fff" stroke-width="1.3"/></svg>
<div class="in" style="left:287.20px;top:1042.10px;width:47.80px;height:20.40px;"></div>
<div class="t" style="left:-369.80px;width:700px;text-align:right;top:1044.10px;">0.0</div>
<div class="in" style="left:343.00px;top:1042.10px;width:50.30px;height:20.40px;"></div>
<div class="t" style="left:346.90px;top:1044.10px;">–</div>
<div class="btnf" style="left:370.10px;top:1043.10px;width:22.20px;height:18.40px;border-radius:0 2px 2px 0"></div>
<svg style="left:375.40px;top:1049.50px" width="12" height="8" viewBox="-6 -4 12 8"><path d="M-5 -3 L0 3.4 L5 -3" fill="none" stroke="#fff" stroke-width="1.3"/></svg>
<div class="in" style="left:396.50px;top:1042.10px;width:65.90px;height:20.40px;"></div>
<div class="t" style="left:400.40px;top:1044.10px;">4.0 °</div>
<div class="btnf" style="left:438.70px;top:1043.10px;width:22.70px;height:18.40px;border-radius:0 2px 2px 0"></div>
<svg style="left:444.25px;top:1049.50px" width="12" height="8" viewBox="-6 -4 12 8"><path d="M-5 -3 L0 3.4 L5 -3" fill="none" stroke="#fff" stroke-width="1.3"/></svg>
<div class="t" style="left:470.20px;top:1044.10px;">-36.5 °</div>
<div class="sep" style="left:8.60px;top:1095.00px;width:523.40px;height:1.40px;"></div>
<div class="t" style="left:16.80px;top:1072.90px;font-size:11.6px">14</div>
<div class="rad" style="left:49.80px;top:1073.60px;width:15.20px;height:15.20px;"></div>
<div class="blue" style="left:77.40px;top:1070.60px;width:22.00px;height:22.30px;"></div>
<svg style="left:81.90px;top:1076.50px" width="14" height="12" viewBox="-7 -6 14 12"><circle cx="-1.9" cy="0.5" r="2.75" fill="none" stroke="#fff" stroke-width="1.7"/><circle cx="1.9" cy="-0.5" r="2.75" fill="none" stroke="#fff" stroke-width="1.7"/></svg>
<div class="t" style="left:110.20px;top:1072.90px;">V12</div>
<div class="in" style="left:396.50px;top:1070.90px;width:65.90px;height:20.40px;"></div>
<div class="t" style="left:400.40px;top:1072.90px;">5.0 °</div>
<div class="btnf" style="left:438.70px;top:1071.90px;width:22.70px;height:18.40px;border-radius:0 2px 2px 0"></div>
<svg style="left:444.25px;top:1078.30px" width="12" height="8" viewBox="-6 -4 12 8"><path d="M-5 -3 L0 3.4 L5 -3" fill="none" stroke="#fff" stroke-width="1.3"/></svg>
<div class="t" style="left:470.20px;top:1072.90px;">-41.5 °</div>
<div class="sep" style="left:8.60px;top:1123.80px;width:523.40px;height:1.40px;"></div>
<div class="t" style="left:16.80px;top:1101.70px;font-size:11.6px">15</div>
<div class="rad" style="left:49.80px;top:1102.40px;width:15.20px;height:15.20px;"></div>
<div class="btn" style="left:77.40px;top:1099.40px;width:22.00px;height:22.30px;"></div>
<svg style="left:81.90px;top:1105.30px" width="14" height="12" viewBox="-7 -6 14 12"><circle cx="-1.9" cy="0.5" r="2.75" fill="none" stroke="#fff" stroke-width="1.7"/><circle cx="1.9" cy="-0.5" r="2.75" fill="none" stroke="#fff" stroke-width="1.7"/></svg>
<div class="in" style="left:105.90px;top:1099.70px;width:107.70px;height:20.40px;"></div>
<div class="t" style="left:109.80px;top:1101.70px;">V12</div>
<div class="btnf" style="left:190.80px;top:1100.70px;width:21.80px;height:18.40px;border-radius:0 2px 2px 0"></div>
<svg style="left:195.90px;top:1107.10px" width="12" height="8" viewBox="-6 -4 12 8"><path d="M-5 -3 L0 3.4 L5 -3" fill="none" stroke="#fff" stroke-width="1.3"/></svg>
<div class="in" style="left:217.30px;top:1099.70px;width:64.00px;height:20.40px;"></div>
<div class="t" style="left:221.20px;top:1101.70px;">Arc</div>
<div class="btnf" style="left:258.80px;top:1100.70px;width:21.50px;height:18.40px;border-radius:0 2px 2px 0"></div>
<svg style="left:263.75px;top:1107.10px" width="12" height="8" viewBox="-6 -4 12 8"><path d="M-5 -3 L0 3.4 L5 -3" fill="none" stroke="#fff" stroke-width="1.3"/></svg>
<div class="in" style="left:287.20px;top:1099.70px;width:47.80px;height:20.40px;"></div>
<div class="t" style="left:-369.80px;width:700px;text-align:right;top:1101.70px;">0.0</div>
<div class="in" style="left:343.00px;top:1099.70px;width:50.30px;height:20.40px;"></div>
<div class="t" style="left:346.90px;top:1101.70px;">–</div>
<div class="btnf" style="left:370.10px;top:1100.70px;width:22.20px;height:18.40px;border-radius:0 2px 2px 0"></div>
<svg style="left:375.40px;top:1107.10px" width="12" height="8" viewBox="-6 -4 12 8"><path d="M-5 -3 L0 3.4 L5 -3" fill="none" stroke="#fff" stroke-width="1.3"/></svg>
<div class="in" style="left:396.50px;top:1099.70px;width:65.90px;height:20.40px;"></div>
<div class="t" style="left:400.40px;top:1101.70px;">9.0 °</div>
<div class="btnf" style="left:438.70px;top:1100.70px;width:22.70px;height:18.40px;border-radius:0 2px 2px 0"></div>
<svg style="left:444.25px;top:1107.10px" width="12" height="8" viewBox="-6 -4 12 8"><path d="M-5 -3 L0 3.4 L5 -3" fill="none" stroke="#fff" stroke-width="1.3"/></svg>
<div class="t" style="left:470.20px;top:1101.70px;">-50.5 °</div>
</div>
<div class="" style="left:532.00px;top:379.20px;width:14.00px;height:730.30px;background:#5c5c5c"></div>
<svg style="left:534.5px;top:382.5px" width="9" height="9" viewBox="0 0 9 9"><path d="M4.5 0.5 L8.3 8 H0.7 Z" fill="#d8d8d8"/></svg>
<svg style="left:534.5px;top:1097.5px" width="9" height="9" viewBox="0 0 9 9"><path d="M4.5 8.5 L8.3 1 H0.7 Z" fill="#d8d8d8"/></svg>
<div class="" style="left:535.30px;top:410.50px;width:7.40px;height:637.50px;background:#a6a6a6;border-radius:3.7px"></div>
<div class="" style="left:8.60px;top:1109.50px;width:537.40px;height:13.60px;background:#5c5c5c"></div>
<svg style="left:11.5px;top:1111.8px" width="9" height="9" viewBox="0 0 9 9"><path d="M0.5 4.5 L8 0.7 V8.3 Z" fill="#d8d8d8"/></svg>
<svg style="left:520.5px;top:1111.8px" width="9" height="9" viewBox="0 0 9 9"><path d="M8.5 4.5 L1 0.7 V8.3 Z" fill="#d8d8d8"/></svg>
<div class="" style="left:25.00px;top:1113.60px;width:489.00px;height:7.00px;background:#a6a6a6;border-radius:3.5px"></div>
<div class="" style="left:558.80px;top:79.80px;width:1021.40px;height:1036.40px;border:1px solid #585858"></div>
<div class="" style="left:559.60px;top:80.30px;width:1019.80px;height:23.40px;background:#808080"></div>
<div class="" style="left:559.60px;top:80.30px;width:33.20px;height:23.40px;background:#728c9e"></div>
<div class="" style="left:592.80px;top:80.30px;width:1.30px;height:23.40px;background:#3a3a3a"></div>
<div class="" style="left:627.00px;top:80.30px;width:1.30px;height:23.40px;background:#3a3a3a"></div>
<div class="" style="left:661.60px;top:80.30px;width:1.30px;height:23.40px;background:#3a3a3a"></div>
<div class="" style="left:696.10px;top:80.30px;width:1.30px;height:23.40px;background:#3a3a3a"></div>
<div class="" style="left:736.40px;top:80.30px;width:1.30px;height:23.40px;background:#3a3a3a"></div>
<div class="" style="left:764.40px;top:80.30px;width:1.30px;height:23.40px;background:#3a3a3a"></div>
<div class="" style="left:792.30px;top:80.30px;width:1.30px;height:23.40px;background:#3a3a3a"></div>
<div class="t b c" style="left:476.00px;width:200px;top:87.00px;font-size:11.8px">Live</div>
<div class="t b c" style="left:510.40px;width:200px;top:87.00px;font-size:11.8px">A</div>
<div class="t b c" style="left:545.00px;width:200px;top:87.00px;font-size:11.8px">B</div>
<div class="t b c" style="left:579.50px;width:200px;top:87.00px;font-size:11.8px">C</div>
<div class="t b c" style="left:617.00px;width:200px;top:87.00px;font-size:11.8px">Quad</div>
<svg style="left:744.5px;top:84.5px" width="13" height="13" viewBox="0 0 13 13"><path d="M0.5 0.5 H10.4 L12.5 2.6 V12.5 H0.5 Z" fill="#fff"/><rect x="3" y="0.5" width="6" height="4.4" fill="#808080"/><rect x="6.6" y="1" width="1.6" height="3.2" fill="#fff"/><rect x="2.4" y="7" width="8.2" height="5.5" fill="#808080"/><rect x="3.4" y="8" width="6.2" height="4.5" fill="#fff"/></svg>
<svg style="left:771.5px;top:86px" width="15" height="11" viewBox="0 0 15 11"><path d="M0.5 10.4 V1 H4.6 L5.8 2.4 H11 V4" fill="#fff" stroke="#fff" stroke-width="0.8"/><path d="M0.6 10.6 L3.2 4.6 H14.6 L12 10.6 Z" fill="#fff" stroke="#808080" stroke-width="0.7"/></svg>
<div class="" style="left:1546.70px;top:80.30px;width:1.30px;height:23.40px;background:#d8d8d8"></div>
<svg style="left:1554.5px;top:88px" width="13" height="9" viewBox="0 0 13 9"><path d="M0.8 0.8 L5.2 4.5 L0.8 8.2 M7 0.8 L11.4 4.5 L7 8.2" fill="none" stroke="#fff" stroke-width="1.5"/></svg>
<div class="" style="left:565.20px;top:109.10px;width:1009.00px;height:955.80px;background:#7c7c7c"></div>
<svg style="left:566.4px;top:110.3px" width="1006.6" height="953.4" viewBox="566.4 110.3 1006.6 953.4">
<defs><linearGradient id="bg" x1="0" y1="0" x2="0" y2="1"><stop offset="0" stop-color="#1c1c1c"/><stop offset="0.45" stop-color="#2b2b2b"/><stop offset="1" stop-color="#4a4a4a"/></linearGradient><clipPath id="cp"><rect x="566.4" y="110.3" width="1006.6" height="953.4"/></clipPath><clipPath id="surf"><polygon points="599.0,490.0 921.0,328.5 992.0,306.0 1074.0,297.0 1157.0,306.0 1225.0,328.0 1408.0,419.0 1472.0,451.0 1518.0,487.0 1534.0,527.0 1520.0,569.0 1470.0,605.0 1148.0,766.0 995.0,741.0 750.0,620.0"/></clipPath></defs>
<g clip-path="url(#cp)"><rect x="566.4" y="110.3" width="1006.6" height="953.4" fill="url(#bg)"/>
<path d="M560 -552.0 L1580 -42.0 M560 -252.0 L1580 -762.0 M560 -429.5 L1580 80.5 M560 -129.5 L1580 -639.5 M560 -307.0 L1580 203.0 M560 -7.0 L1580 -517.0 M560 -184.5 L1580 325.5 M560 115.5 L1580 -394.5 M560 -62.0 L1580 448.0 M560 238.0 L1580 -272.0 M560 60.5 L1580 570.5 M560 360.5 L1580 -149.5 M560 183.0 L1580 693.0 M560 483.0 L1580 -27.0 M560 305.5 L1580 815.5 M560 605.5 L1580 95.5 M560 428.0 L1580 938.0 M560 728.0 L1580 218.0 M560 550.5 L1580 1060.5 M560 850.5 L1580 340.5 M560 673.0 L1580 1183.0 M560 973.0 L1580 463.0 M560 795.5 L1580 1305.5 M560 1095.5 L1580 585.5 M560 918.0 L1580 1428.0 M560 1218.0 L1580 708.0 M560 1040.5 L1580 1550.5 M560 1340.5 L1580 830.5 M560 1163.0 L1580 1673.0 M560 1463.0 L1580 953.0 M560 1285.5 L1580 1795.5 M560 1585.5 L1580 1075.5" stroke="#c4c4c4" stroke-opacity="0.3" stroke-width="1" stroke-dasharray="2.4 2.4" fill="none"/>
<path d="M809.5 110 V384 M814.5 110 V384" stroke="#bdbdbd" stroke-opacity="0.4" stroke-width="1" stroke-dasharray="2 2" fill="none"/>
<path d="M1354 392 L1573 290 M1383 405 L1573 317 M1429 427 L1573 365 M1453 441 L1573 388 M1471 451 L1573 415 M1490 465 L1573 437 M1508 479 L1573 457 M1528 506 L1573 494 M1533 529 L1573 524 M1340 385 L1573 268 M1450 134 L1290 250 L1095 345 M1455 160 L1240 330 M1400 150 L1180 330 M1490 118 L1330 230 L1100 340" stroke="#d0d0d0" stroke-opacity="0.5" stroke-width="1" stroke-dasharray="2.2 2.2" fill="none"/>
<path d="M1573 253 L1355 391 L1100 560 M1148 764 L1573 810 M1201 774 L1573 860 M1163 795 L1573 1012 M1100 740 L1573 845 M1050 754 L1573 788 M579 400 L643 467 M950 735 L1165 1063 M985 738 L1100 850 L1390 1063 M1035 820 L1330 1063" stroke="#c0c0c0" stroke-opacity="0.5" stroke-width="0.9" fill="none"/>
<path d="M567 496 L809 665 M567 581 L809 665 M567 667 L751 620 M567 724 L790 660 M809 665 L940 735" stroke="#d0d0d0" stroke-opacity="0.55" stroke-width="1" stroke-dasharray="1.5 1.5" fill="none"/>
<path d="M566 553.5 L953 750 L1339 1063 M939 740 L1100 828 L1380 1063" stroke="#c26a1a" stroke-opacity="0.85" stroke-width="1" fill="none"/>
<path d="M566 625 L752 621 M566 682 L860 676 L1000 680" stroke="#c97a2a" stroke-opacity="0.8" stroke-width="1.2" stroke-dasharray="1.5 1.5" fill="none"/>
<path d="M686 110 L741 440 L777 600" stroke="#c8693a" stroke-opacity="0.75" stroke-width="1" stroke-dasharray="1.5 2" fill="none"/>
<path d="M905 713 H1573 M915 720.6 H1573" stroke="#e0e0e0" stroke-opacity="0.6" stroke-width="1.1" stroke-dasharray="3 2" fill="none"/>
<path d="M860 700.5 L1573 1057" stroke="#b8651f" stroke-opacity="0.9" stroke-width="1" stroke-dasharray="2.5 2.5" fill="none"/>
<path d="M1000 671 L1573 712" stroke="#c97a2a" stroke-opacity="0.7" stroke-width="1" stroke-dasharray="2 2" fill="none"/>
<path d="M1296 362 L1573 240 M1410 422 L1573 343 M1480 573 L1573 573 M1416 631 L1573 630 M893 110 L845 363 M1013 110 L970 340" stroke="#d8c81e" stroke-width="1.3" stroke-dasharray="1.6 1.6" fill="none"/>
<path d="M973 110 L935 324" stroke="#c8c8c8" stroke-opacity="0.6" stroke-width="1" stroke-dasharray="1.2 1.6" fill="none"/>
<path d="M566 847.5 L860 700.5" stroke="#1fa83a" stroke-width="1" stroke-dasharray="2 2" fill="none"/>
<path d="M1397 432 L1573 344" stroke="#1f9a38" stroke-width="1" fill="none"/>
<path d="M860.3 110 V700" stroke="#2a86b0" stroke-width="1" fill="none"/>
<path d="M860.3 700 V1064" stroke="#2a86b0" stroke-width="1" stroke-dasharray="2 2" fill="none"/>
<polygon points="599.0,490.0 921.0,328.5 992.0,306.0 1074.0,297.0 1157.0,306.0 1225.0,328.0 1408.0,419.0 1472.0,451.0 1518.0,487.0 1534.0,527.0 1520.0,569.0 1470.0,605.0 1148.0,766.0 995.0,741.0 750.0,620.0" fill="#00ff00"/>
<polygon points="599.0,490.0 855.0,361.6 858.0,360.0 867.0,356.0 880.0,352.0 893.0,350.0 905.0,349.0 921.5,343.8 940.0,343.0 962.0,338.4 985.0,335.0 1003.0,331.6 1030.0,330.0 1057.0,329.0 1085.0,329.5 1111.6,330.0 1135.0,331.5 1152.0,333.0 1172.0,336.0 1193.0,339.7 1215.0,346.0 1236.5,353.3 1262.0,363.0 1285.4,372.3 1312.0,384.0 1340.0,396.8 1365.0,410.0 1394.0,426.0 1414.0,439.0 1435.0,455.0 1450.0,467.0 1462.0,479.0 1474.0,492.0 1484.0,505.0 1490.0,520.0 1491.0,536.0 1489.0,552.0 1484.0,567.0 1474.0,582.0 1462.0,595.0 1440.0,612.0 1416.0,631.0 1148.0,766.0 995.0,741.0 750.0,620.0" fill="#ffff00"/>
<g clip-path="url(#surf)">
<polygon points="676.0,538.0 680.0,524.0 688.0,514.0 699.0,508.0 714.0,500.0 730.0,493.0 742.0,492.0 755.0,488.0 775.0,491.0 792.0,493.0 805.0,498.0 817.0,505.0 826.0,514.0 835.0,518.0 848.0,527.0 860.0,533.0 876.0,540.0 891.0,549.0 910.0,554.0 928.0,558.0 950.0,563.0 969.0,569.0 992.0,578.0 1015.0,586.0 1040.0,598.0 1062.0,611.0 1080.0,620.0 1096.0,629.0 1108.0,638.0 1118.0,648.0 1125.0,658.0 1131.0,667.0 1155.0,676.0 1180.0,685.0 1190.0,687.0 1196.0,692.0 1192.0,701.0 1186.0,710.0 1175.0,716.0 1160.0,726.0 1148.0,733.0 1135.0,740.0 1121.0,746.0 1100.0,748.0 1084.0,750.0 1050.0,754.0 1020.0,748.0 995.0,741.0 750.0,620.0" fill="#ffcc00"/>
<polygon points="792.0,640.5 797.0,628.0 804.0,620.0 816.0,618.0 829.0,617.0 838.0,613.0 848.0,611.0 862.0,609.0 876.0,609.0 888.0,610.0 897.0,614.0 905.0,621.0 910.0,630.0 906.0,638.0 900.0,645.0 901.0,652.0 904.0,657.0 912.0,662.0 922.0,664.0 935.0,661.0 947.0,660.0 958.0,663.0 969.0,664.0 985.0,664.0 1000.0,667.0 1010.0,672.0 1015.0,679.0 1013.0,688.0 1009.0,695.0 1006.0,704.0 1000.0,713.0 978.0,718.0 953.0,719.0 945.0,718.0 952.0,720.0" fill="#ff6600"/>
<ellipse cx="704" cy="626" rx="4" ry="1.8" fill="#ff6600"/><ellipse cx="984" cy="733" rx="3" ry="2" fill="#ff6600"/>
<path d="M750 620 L1073 457 M995 741 L1318 580 M860 700.5 L1397 432" stroke="#3cb83c" stroke-width="0.9" fill="none"/>
<path d="M860.3 300 V760" stroke="#49a8a0" stroke-width="1" fill="none"/>
<path d="M741 440 L777 600" stroke="#e8a020" stroke-width="1" stroke-dasharray="1.5 2" fill="none"/>
<path d="M750 620 L1240 690 M800 590 L1300 540 M912 650 L1480 573 M912 650 L1300 690 M800 590 L870 440 M912 640 L935 560 M800 595 L680 545" stroke="#ffff30" stroke-opacity="0.8" stroke-width="1" stroke-dasharray="1.6 1.6" fill="none"/>
<path d="M1006 671 L1573 712" stroke="#ff7a00" stroke-width="1" stroke-dasharray="1.6 2" fill="none"/>
<path d="M1073 457 L992 306 M1073 457 L1157 306 M1073 457 L1225 328" stroke="#ff8c00" stroke-width="0.9" fill="none"/>
<path d="M1318 580 L1472 451" stroke="#ffa800" stroke-width="0.9" fill="none"/>
<path d="M1318 580 L1518 487 M1318 580 L1534 527 M1318 580 L1520 569" stroke="#d05a00" stroke-width="1" fill="none"/>
<path d="M1073 457 L1318 580" stroke="#8a3000" stroke-width="1.1" fill="none"/>
<path d="M921 329 L1073 457" stroke="#ff2a00" stroke-width="2.6" fill="none"/><path d="M921 329 L1073 457" stroke="#3a1400" stroke-width="1.3" fill="none"/>
<path d="M1318 580 L1470 605" stroke="#ff2a00" stroke-width="2.4" fill="none"/><path d="M1318 580 L1470 605" stroke="#4a1800" stroke-width="1.1" fill="none"/>
</g>
<polyline points="921.0,328.5 992.0,306.0 1074.0,297.0 1157.0,306.0 1225.0,328.0 1408.0,419.0 1472.0,451.0 1518.0,487.0 1534.0,527.0 1520.0,569.0 1470.0,605.0" fill="none" stroke="#e03000" stroke-width="0.7"/>
<path d="M750 620 L995 741" stroke="#5b9bd0" stroke-width="1.2" fill="none"/>
<path d="M599 490 L921 328.5 M1470 605 L1148 766 L995 741" stroke="#30c030" stroke-width="0.8" fill="none"/>
<path d="M803 585 L802 596 L799 608 L795 618" stroke="#3c3c08" stroke-width="6.4" fill="none"/>
<path d="M803 585 L802 596 L799 608 L795 618" stroke="#a4a424" stroke-width="5" stroke-dasharray="1.1 1.2" fill="none"/>
<path d="M915 640 L914 651 L911 663 L906 673" stroke="#3c3c08" stroke-width="6.4" fill="none"/>
<path d="M915 640 L914 651 L911 663 L906 673" stroke="#a4a424" stroke-width="5" stroke-dasharray="1.1 1.2" fill="none"/>
<path d="M775.5 592 L775.5 611" stroke="#3c3c3c" stroke-width="6" fill="none"/>
<path d="M775.5 592 L775.5 611" stroke="#b8b8b8" stroke-width="4.6" stroke-dasharray="1.2 1.2" fill="none"/>
<path d="M919 665 L915 680" stroke="#3c3c3c" stroke-width="6" fill="none"/>
<path d="M919 665 L915 680" stroke="#b8b8b8" stroke-width="4.6" stroke-dasharray="1.2 1.2" fill="none"/>
<rect x="812.0" y="664.0" width="6" height="9.5" fill="#6a6a6a" fill-opacity="0.75" stroke="#c0c0c0" stroke-width="0.7" stroke-dasharray="1 1"/>
<rect x="820.1" y="668.2" width="6" height="9.5" fill="#6a6a6a" fill-opacity="0.75" stroke="#c0c0c0" stroke-width="0.7" stroke-dasharray="1 1"/>
<rect x="828.2" y="672.4" width="6" height="9.5" fill="#6a6a6a" fill-opacity="0.75" stroke="#c0c0c0" stroke-width="0.7" stroke-dasharray="1 1"/>
<rect x="836.3" y="676.6" width="6" height="9.5" fill="#6a6a6a" fill-opacity="0.75" stroke="#c0c0c0" stroke-width="0.7" stroke-dasharray="1 1"/>
<rect x="844.4" y="680.8" width="6" height="9.5" fill="#6a6a6a" fill-opacity="0.75" stroke="#c0c0c0" stroke-width="0.7" stroke-dasharray="1 1"/>
<rect x="852.5" y="685.0" width="6" height="9.5" fill="#6a6a6a" fill-opacity="0.75" stroke="#c0c0c0" stroke-width="0.7" stroke-dasharray="1 1"/>
<rect x="860.6" y="689.2" width="6" height="9.5" fill="#6a6a6a" fill-opacity="0.75" stroke="#c0c0c0" stroke-width="0.7" stroke-dasharray="1 1"/>
<rect x="868.7" y="693.4" width="6" height="9.5" fill="#6a6a6a" fill-opacity="0.75" stroke="#c0c0c0" stroke-width="0.7" stroke-dasharray="1 1"/>
<rect x="876.8" y="697.6" width="6" height="9.5" fill="#6a6a6a" fill-opacity="0.75" stroke="#c0c0c0" stroke-width="0.7" stroke-dasharray="1 1"/>
<rect x="884.9" y="701.8" width="6" height="9.5" fill="#6a6a6a" fill-opacity="0.75" stroke="#c0c0c0" stroke-width="0.7" stroke-dasharray="1 1"/>
<rect x="893.0" y="706.0" width="6" height="9.5" fill="#6a6a6a" fill-opacity="0.75" stroke="#c0c0c0" stroke-width="0.7" stroke-dasharray="1 1"/>
<rect x="901.1" y="710.2" width="6" height="9.5" fill="#6a6a6a" fill-opacity="0.75" stroke="#c0c0c0" stroke-width="0.7" stroke-dasharray="1 1"/>
<rect x="909.2" y="714.4" width="6" height="9.5" fill="#6a6a6a" fill-opacity="0.75" stroke="#c0c0c0" stroke-width="0.7" stroke-dasharray="1 1"/>
<path d="M808 664 H815 M808 664 V674 M815 676 L915 728" stroke="#c8c8c8" stroke-opacity="0.6" stroke-width="0.8" stroke-dasharray="1.5 1.5" fill="none"/>
</g></svg>
<div class="t" style="left:659.00px;top:787.90px;font-size:10.6px;color:#9c9c9c">0m (Y)</div>
<div class="t" style="left:1122.00px;top:811.90px;font-size:10.6px;color:#9c9c9c">0m (X)</div>
<div class="t" style="left:782.00px;top:848.90px;font-size:10.6px;color:#9c9c9c">-20m</div>
<div class="t" style="left:1001.00px;top:873.40px;font-size:10.6px;color:#9c9c9c">-20m</div>
<div class="t" style="left:904.00px;top:909.90px;font-size:10.6px;color:#9c9c9c">-40m</div>
<div class="t" style="left:878.00px;top:934.40px;font-size:10.6px;color:#9c9c9c">-40m</div>
<div class="t" style="left:1027.00px;top:970.90px;font-size:10.6px;color:#9c9c9c">-60m</div>
<div class="t" style="left:756.00px;top:995.40px;font-size:10.6px;color:#9c9c9c">-60m</div>
<div class="t" style="left:1148.00px;top:1032.40px;font-size:10.6px;color:#9c9c9c">-80m</div>
<div class="t" style="left:1245.00px;top:750.90px;font-size:10.6px;color:#9c9c9c">20m</div>
<div class="t" style="left:1367.00px;top:689.90px;font-size:10.6px;color:#9c9c9c">40m</div>
<div class="t" style="left:1489.00px;top:628.90px;font-size:10.6px;color:#9c9c9c">60m</div>
<div style="left:566px;top:1050px;width:200px;height:13.6px;overflow:hidden"><div class="t" style="left:69px;top:7.6px;font-size:10.6px;color:#9c9c9c">-80m</div></div>
<div class="t b" style="left:578.00px;top:114.90px;font-size:10.1px">Live</div>
<div class="t" style="left:612.60px;top:114.90px;font-size:11.4px">(Pink A, 0.0 dBu)</div>
<div class="t" style="left:865.60px;width:700px;text-align:right;top:111.30px;font-size:12.2px">SUB array is always calculated using complex SPL summation.</div>
<div class="t" style="left:865.60px;width:700px;text-align:right;top:125.10px;font-size:12.2px">SPL mapping is shown at listener height.</div>
<svg style="left:567.5px;top:1077.5px" width="11" height="13" viewBox="0 0 11 13"><path d="M5.5 0.6 L10.2 5 L5.5 9.4 L0.8 5 Z" fill="#d0d0d0"/><path d="M1 8 L5.5 12 L10 8" fill="none" stroke="#d0d0d0" stroke-width="1.2"/></svg>
<div class="" style="left:583.70px;top:1074.40px;width:191.70px;height:20.90px;border:1px solid #8a8a8a;border-radius:2px;background:#1b1b1b"></div>
<div class="" style="left:631.40px;top:1074.40px;width:1.00px;height:20.90px;background:#8a8a8a"></div>
<div class="" style="left:679.20px;top:1074.40px;width:1.00px;height:20.90px;background:#8a8a8a"></div>
<div class="" style="left:727.30px;top:1074.40px;width:1.00px;height:20.90px;background:#8a8a8a"></div>
<div class="t tab c" style="left:507.80px;width:200px;top:1077.20px;">Top</div>
<div class="t tab c" style="left:555.30px;width:200px;top:1077.20px;">End</div>
<div class="t tab c" style="left:603.00px;width:200px;top:1077.20px;">Side</div>
<div class="t tab c" style="left:651.30px;width:200px;top:1077.20px;">Iso</div>
<svg style="left:1021.8px;top:1079.5px" width="10" height="10" viewBox="0 0 10 10"><path d="M1 1 L9 9 M9 1 L1 9" stroke="#bdbdbd" stroke-width="1.4"/></svg>
<div class="" style="left:1042.00px;top:1074.40px;width:71.20px;height:20.90px;border:1px solid #8a8a8a;border-radius:2px;background:#1b1b1b"></div>
<div class="t tab c" style="left:977.40px;width:200px;top:1077.00px;">Clear SPL</div>
<svg style="left:1358.2px;top:1079.6px" width="13.6" height="11" viewBox="0 0 13.6 11"><path d="M0 5.5 Q6.8 -3.2 13.6 5.5 Q6.8 14.2 0 5.5 Z" fill="#c4c4c4"/><circle cx="6.8" cy="5.5" r="3.5" fill="#1b1b1b"/><circle cx="6.8" cy="5.5" r="1.8" fill="#ececec"/></svg>
<div class="" style="left:1379.50px;top:1074.40px;width:72.40px;height:20.90px;background:#728c9e;border-radius:2px"></div>
<div class="t tab c" style="left:1315.60px;width:200px;top:1077.00px;">Dispersion</div>
<div class="" style="left:1455.20px;top:1074.40px;width:57.00px;height:20.90px;background:#728c9e;border-radius:2px"></div>
<div class="t tab c" style="left:1383.60px;width:200px;top:1077.00px;">Solid</div>
<div class="" style="left:1516.10px;top:1074.40px;width:56.90px;height:20.90px;border:1px solid #8a8a8a;border-radius:2px;background:#1b1b1b"></div>
<div class="t tab c" style="left:1444.40px;width:200px;top:1077.00px;">X-Y-Z</div>
<div class="t" style="left:1585.60px;top:84.00px;font-size:11.5px">Color</div>
<div class="" style="left:1585.60px;top:99.20px;width:238.80px;height:1.20px;background:#5a5a5a"></div>
<div class="" style="left:1684.10px;top:109.10px;width:20.90px;height:697.30px;background:#e6e6e6"></div>
<div class="" style="left:1685.10px;top:110.10px;width:18.90px;height:218.40px;background:#ff0000"></div>
<div class="" style="left:1685.10px;top:328.20px;width:18.90px;height:38.70px;background:#ff6600"></div>
<div class="" style="left:1685.10px;top:366.60px;width:18.90px;height:38.70px;background:#ffcc00"></div>
<div class="" style="left:1685.10px;top:405.00px;width:18.90px;height:38.70px;background:#ffff00"></div>
<div class="" style="left:1685.10px;top:443.40px;width:18.90px;height:38.70px;background:#00ff00"></div>
<div class="" style="left:1685.10px;top:481.80px;width:18.90px;height:38.70px;background:#339966"></div>
<div class="" style="left:1685.10px;top:520.20px;width:18.90px;height:38.70px;background:#00ccff"></div>
<div class="" style="left:1685.10px;top:558.60px;width:18.90px;height:38.70px;background:#0000ff"></div>
<div class="" style="left:1685.10px;top:597.00px;width:18.90px;height:208.70px;background:#800080"></div>
<div class="t" style="left:980.40px;width:700px;text-align:right;top:102.00px;font-size:10.6px;color:#a8a8a8">144dB</div>
<div class="" style="left:1680.60px;top:109.60px;width:3.40px;height:1.00px;background:#a8a8a8"></div>
<div class="t" style="left:980.40px;width:700px;text-align:right;top:179.26px;font-size:10.6px;color:#a8a8a8">132dB</div>
<div class="" style="left:1680.60px;top:186.86px;width:3.40px;height:1.00px;background:#a8a8a8"></div>
<div class="t" style="left:980.40px;width:700px;text-align:right;top:256.52px;font-size:10.6px;color:#a8a8a8">120dB</div>
<div class="" style="left:1680.60px;top:264.12px;width:3.40px;height:1.00px;background:#a8a8a8"></div>
<div class="t" style="left:980.40px;width:700px;text-align:right;top:333.78px;font-size:10.6px;color:#a8a8a8">108dB</div>
<div class="" style="left:1680.60px;top:341.38px;width:3.40px;height:1.00px;background:#a8a8a8"></div>
<div class="t" style="left:980.40px;width:700px;text-align:right;top:411.04px;font-size:10.6px;color:#a8a8a8">96dB</div>
<div class="" style="left:1680.60px;top:418.64px;width:3.40px;height:1.00px;background:#a8a8a8"></div>
<div class="t" style="left:980.40px;width:700px;text-align:right;top:488.30px;font-size:10.6px;color:#a8a8a8">84dB</div>
<div class="" style="left:1680.60px;top:495.90px;width:3.40px;height:1.00px;background:#a8a8a8"></div>
<div class="t" style="left:980.40px;width:700px;text-align:right;top:565.56px;font-size:10.6px;color:#a8a8a8">72dB</div>
<div class="" style="left:1680.60px;top:573.16px;width:3.40px;height:1.00px;background:#a8a8a8"></div>
<div class="t" style="left:980.40px;width:700px;text-align:right;top:642.82px;font-size:10.6px;color:#a8a8a8">60dB</div>
<div class="" style="left:1680.60px;top:650.42px;width:3.40px;height:1.00px;background:#a8a8a8"></div>
<div class="t" style="left:980.40px;width:700px;text-align:right;top:720.08px;font-size:10.6px;color:#a8a8a8">48dB</div>
<div class="" style="left:1680.60px;top:727.68px;width:3.40px;height:1.00px;background:#a8a8a8"></div>
<div class="t" style="left:980.40px;width:700px;text-align:right;top:797.34px;font-size:10.6px;color:#a8a8a8">36dB</div>
<div class="" style="left:1680.60px;top:804.94px;width:3.40px;height:1.00px;background:#a8a8a8"></div>
<svg style="left:1709px;top:321.2px" width="9" height="14" viewBox="0 0 9 14"><path d="M8.8 0.4 V13.6 L0.3 7 Z" fill="#8e8e8e"/></svg>
<div class="t" style="left:1724.00px;top:320.40px;font-size:7.8px">Highest SPL</div>
<div class="btnf" style="left:1669.30px;top:831.20px;width:51.80px;height:19.60px;border-radius:2px"></div>
<div class="" style="left:1694.00px;top:831.20px;width:1.20px;height:19.60px;background:#1b1b1b"></div>
<div style="left:1676.60px;top:840.00px;width:10px;height:2px;background:#fff"></div>
<div style="left:1702.60px;top:840.00px;width:10px;height:2px;background:#fff"></div><div style="left:1706.60px;top:836.00px;width:2px;height:10px;background:#fff"></div>
<div class="" style="left:1732.00px;top:831.20px;width:52.60px;height:19.60px;border:1px solid #8a8a8a;border-radius:2px;background:#1b1b1b"></div>
<div class="" style="left:1758.40px;top:831.20px;width:26.20px;height:19.60px;background:#728c9e;border-radius:0 2px 2px 0"></div>
<div class="t tab c" style="left:1645.20px;width:200px;top:833.80px;">3</div>
<div class="t tab c" style="left:1671.60px;width:200px;top:833.80px;">6</div>
<div class="t" style="left:1728.50px;top:856.40px;font-size:11.6px">dB per division</div>
<div class="t" style="left:1585.60px;top:892.20px;font-size:11.5px">Signal selection</div>
<div class="" style="left:1585.60px;top:907.20px;width:238.80px;height:1.10px;background:#5a5a5a"></div>
<div class="" style="left:1585.60px;top:932.30px;width:238.80px;height:1.20px;background:#4a4a4a"></div>
<div class="" style="left:1585.60px;top:956.30px;width:238.80px;height:1.20px;background:#4a4a4a"></div>
<div class="" style="left:1585.60px;top:980.20px;width:238.80px;height:1.20px;background:#4a4a4a"></div>
<div class="" style="left:1585.60px;top:1004.30px;width:238.80px;height:1.20px;background:#4a4a4a"></div>
<div class="" style="left:1585.60px;top:1028.50px;width:238.80px;height:1.20px;background:#4a4a4a"></div>
<div class="t g" style="left:1591.60px;top:913.20px;">Level (dBu):</div>
<div class="" style="left:1661.70px;top:910.60px;width:108.60px;height:20.20px;background:#2d2d2d"></div>
<div class="t" style="left:1066.40px;width:700px;text-align:right;top:913.20px;">0.0</div>
<div class="btnf" style="left:1770.90px;top:910.60px;width:22.80px;height:20.20px;"></div>
<div class="btnf" style="left:1795.20px;top:910.60px;width:22.50px;height:20.20px;"></div>
<div style="left:1777.30px;top:919.80px;width:10px;height:2px;background:#fff"></div>
<div style="left:1801.50px;top:919.80px;width:10px;height:2px;background:#fff"></div><div style="left:1805.50px;top:915.80px;width:2px;height:10px;background:#fff"></div>
<div class="t g" style="left:1591.60px;top:938.00px;">Type:</div>
<div class="" style="left:1661.70px;top:936.20px;width:156.00px;height:18.60px;background:#2d2d2d"></div>
<div class="t" style="left:1664.60px;top:938.00px;">Spectrum</div>
<div class="btnf" style="left:1795.90px;top:936.20px;width:21.80px;height:18.60px;"></div>
<svg style="left:1800.80px;top:942.60px" width="12" height="8" viewBox="-6 -4 12 8"><path d="M-5 -3 L0 3.4 L5 -3" fill="none" stroke="#fff" stroke-width="1.3"/></svg>
<div class="t g" style="left:1591.60px;top:961.90px;">Norm:</div>
<div class="" style="left:1661.70px;top:960.10px;width:156.00px;height:18.60px;background:#2d2d2d"></div>
<div class="t" style="left:1664.60px;top:961.90px;">Pink noise</div>
<div class="btnf" style="left:1795.90px;top:960.10px;width:21.80px;height:18.60px;"></div>
<svg style="left:1800.80px;top:966.50px" width="12" height="8" viewBox="-6 -4 12 8"><path d="M-5 -3 L0 3.4 L5 -3" fill="none" stroke="#fff" stroke-width="1.3"/></svg>
<div class="t g" style="left:1591.60px;top:985.90px;">Weighting:</div>
<div class="" style="left:1661.70px;top:984.10px;width:156.00px;height:18.60px;background:#2d2d2d"></div>
<div class="t" style="left:1664.60px;top:985.90px;">A</div>
<div class="btnf" style="left:1795.90px;top:984.10px;width:21.80px;height:18.60px;"></div>
<svg style="left:1800.80px;top:990.50px" width="12" height="8" viewBox="-6 -4 12 8"><path d="M-5 -3 L0 3.4 L5 -3" fill="none" stroke="#fff" stroke-width="1.3"/></svg>
<div class="" style="left:1661.70px;top:1008.40px;width:156.00px;height:18.00px;background:#414141"></div>
<div class="t tab c" style="left:1639.70px;width:200px;top:1009.80px;color:#b4b4b4">Interferences (&lt;= 163 Hz)</div>
<div class="t" style="left:1585.60px;top:1049.20px;font-size:11.5px">SPL calculation</div>
<div class="" style="left:1585.60px;top:1065.00px;width:238.80px;height:1.10px;background:#5a5a5a"></div>
<div class="t g" style="left:1591.60px;top:1069.40px;">Highest SPL:</div>
<div class="" style="left:1668.10px;top:1067.80px;width:150.80px;height:18.40px;background:#1b1b1b;border:1px solid #6e6e6e;border-radius:2px"></div>
<div class="t" style="left:1115.20px;width:700px;text-align:right;top:1069.40px;">110.2 dB</div>
<div class="" style="left:1585.60px;top:1087.20px;width:238.80px;height:1.10px;background:#4a4a4a"></div>
<div class="" style="left:1592.50px;top:1092.10px;width:94.00px;height:18.60px;background:#1f7fb2;border-radius:1px"></div>
<div class="t tab c" style="left:1539.60px;width:200px;top:1093.80px;">Autocalculate</div>
<div class="btnf" style="left:1723.90px;top:1092.10px;width:93.90px;height:18.60px;border-radius:1px"></div>
<div class="t tab c" style="left:1670.80px;width:200px;top:1093.80px;">Recalculate</div>
<div class="" style="left:1585.60px;top:1113.20px;width:238.80px;height:1.10px;background:#4a4a4a"></div>
</div></body></html>
